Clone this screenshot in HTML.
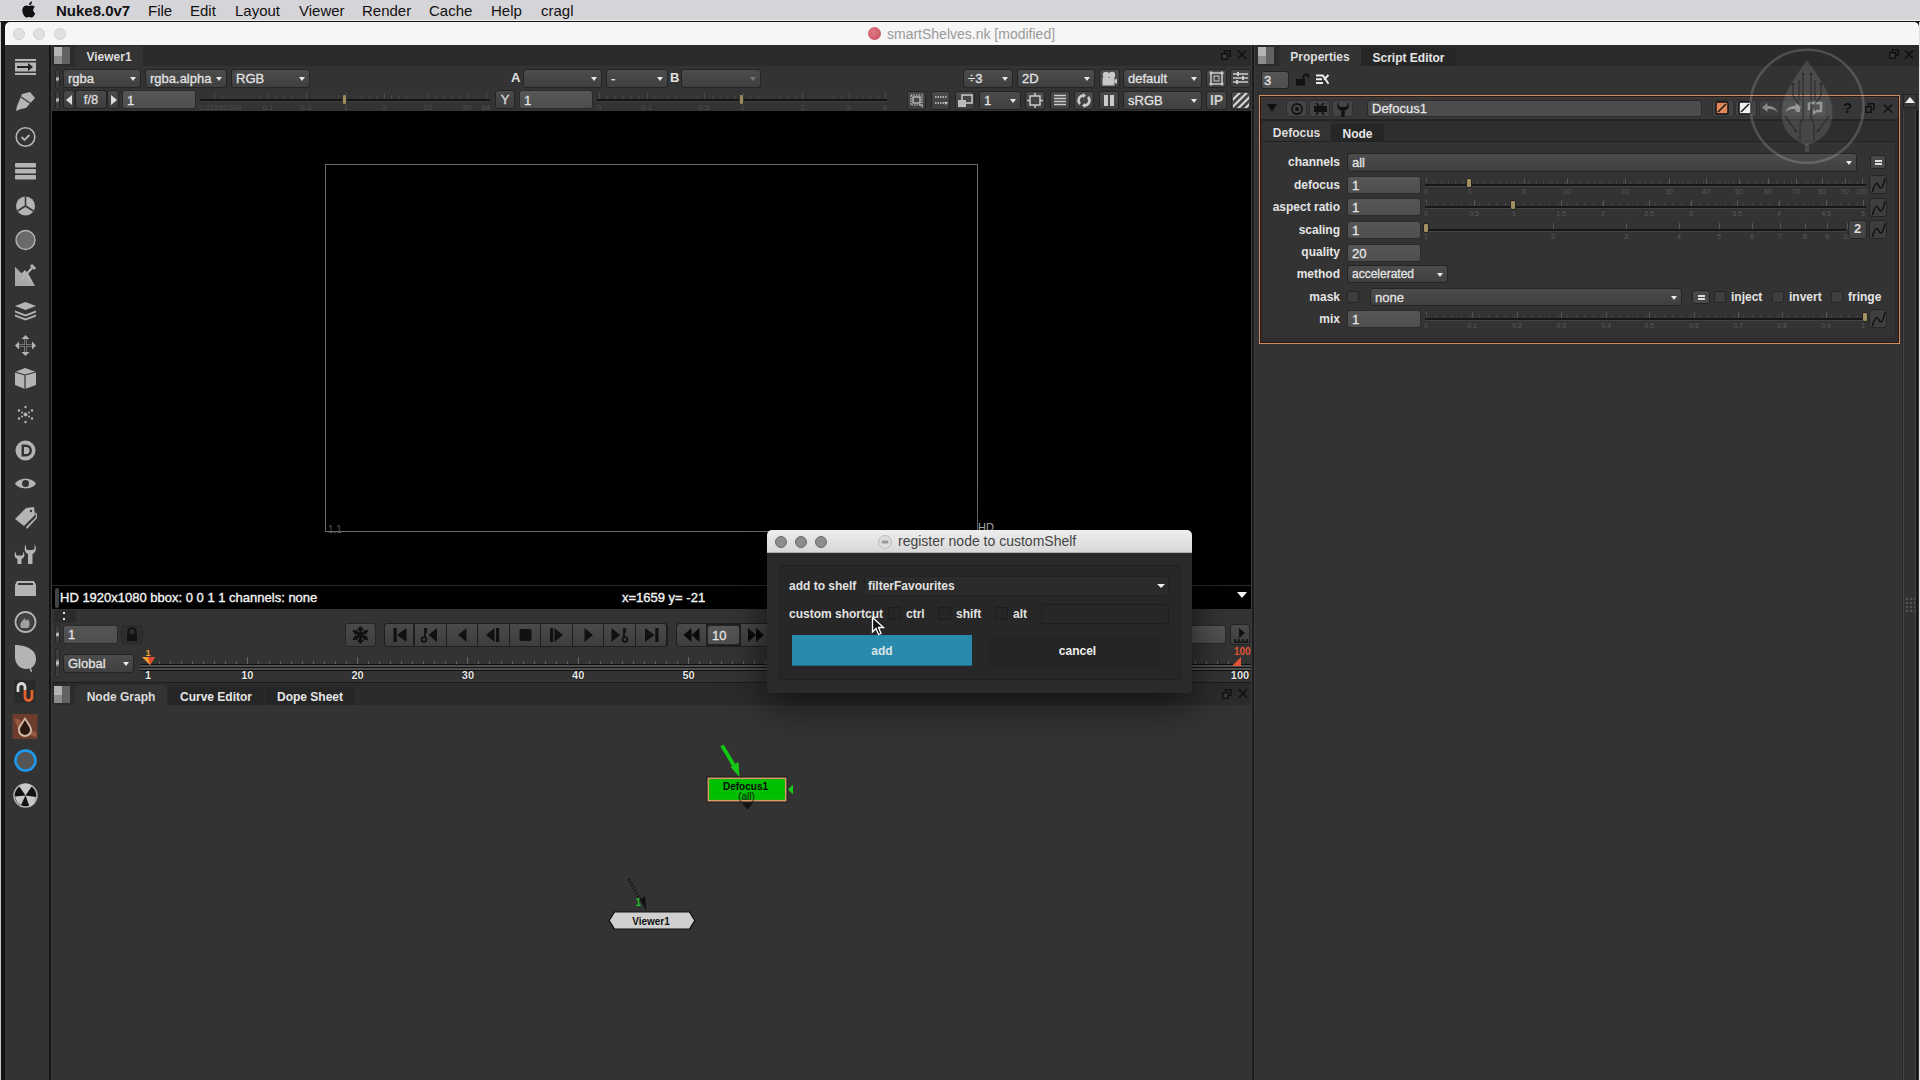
<!DOCTYPE html>
<html><head><meta charset="utf-8">
<style>
*{box-sizing:border-box;margin:0;padding:0}
html,body{width:1920px;height:1080px;overflow:hidden;background:#141414;font-family:"Liberation Sans",sans-serif}
.a{position:absolute}
.mi{position:absolute;top:2px;font-size:15px;color:#111;line-height:18px}
.tl{position:absolute;top:6px;width:12px;height:12px;border-radius:50%;background:#e0e0e0;border:1px solid #d2d2d2}
.tab{position:absolute;height:21px;background:#333;color:#ddd;font-size:13px;line-height:21px;text-align:center;border-radius:3px 3px 0 0}
.tab2{background:#262626;color:#e6e6e6}
.dd{position:absolute;height:19px;background:linear-gradient(#4c4c4c,#3f3f3f);border-radius:3px;border:1px solid #242424;color:#e2e2e2;font-size:13px;line-height:18px;padding-left:4px;white-space:nowrap;-webkit-text-stroke:0.3px #e2e2e2}
.dd:after{content:"";position:absolute;right:4px;top:7px;border-left:3.5px solid transparent;border-right:3.5px solid transparent;border-top:4px solid #e8e8e8}
.dis:after{border-top-color:#777}
.pdd{font-size:13px;line-height:17px}
.btn{position:absolute;height:19px;background:linear-gradient(#4a4a4a,#3e3e3e);border-radius:3px;border:1px solid #242424}
.inp{position:absolute;background:linear-gradient(#565656,#4e4e4e);border-radius:3px;border:1px solid #2a2a2a;color:#e4e4e4;font-size:13px;padding-left:4px;-webkit-text-stroke:0.3px #e4e4e4}
.pinp{font-size:13px;line-height:17px}
.lbl{font-size:13px;font-weight:bold;color:#e0e0e0}
.grip{position:absolute;width:5px;height:20px;border-radius:3px;background:linear-gradient(170deg,#3c3c3c 35%,#cfcfcf 50%,#3c3c3c 65%);border:1px solid #262626}
.slider{position:absolute;height:19px}
.slider:before{content:"";position:absolute;left:0;right:0;top:9px;height:2px;background:#141414}
.hdl{position:absolute;top:3px;width:5px;height:11px;border-radius:2px;background:#9c8c5c;border:1px solid #333}
.hdl2{position:absolute;width:6px;height:10px;border-radius:2px;background:#a39060;border:1px solid #222}
.tri-l{position:absolute;left:2px;top:4px;border-top:5px solid transparent;border-bottom:5px solid transparent;border-right:6px solid #ddd}
.tri-r{position:absolute;left:3px;top:4px;border-top:5px solid transparent;border-bottom:5px solid transparent;border-left:6px solid #ddd}
.info{font-size:13px;color:#f4f4f4;-webkit-text-stroke:0.35px #f4f4f4}
.rl{width:24px;text-align:center;font-size:11px;font-weight:bold;color:#e8e8e8;text-shadow:0 0 1px #000,0 0 1px #000}
.plbl{text-align:right;font-size:12px;font-weight:bold;color:#e4e4e4;line-height:16px}
.plbl2{font-size:12px;font-weight:bold;color:#e4e4e4;line-height:16px}
.tlb{width:20px;text-align:center;font-size:7px;color:#5a5a5a}
.cb{width:12px;height:12px;background:#3e3e3e;border:1px solid #262626;border-radius:2px}
.dlbl{font-size:12px;font-weight:bold;color:#e2e2e2;line-height:16px}
.dcb{width:13px;height:13px;background:#262626;border:1px solid #1c1c1c;border-radius:2px}
</style></head><body>
<div class="a" style="left:0;top:0;width:1920px;height:21px;background:#d5d4d8"></div>
<div class="a" style="left:0;top:20px;width:1920px;height:1px;background:#f0f0f0"></div><div class="a" style="left:0;top:21px;width:1920px;height:1px;background:#111"></div>
<svg class="a" style="left:21px;top:1px" width="15" height="17" viewBox="0 0 15 17"><path d="M12.2 9c0-2 1.6-3 1.7-3-1-1.4-2.4-1.6-2.9-1.6-1.2-.1-2.4.7-3 .7-.6 0-1.6-.7-2.6-.7C4 4.4 2.7 5.2 2 6.4.6 8.9 1.7 12.500 3 14.5c.7 1 1.5 2 2.500 2 1 0 1.400-.6 2.600-.6 1.200 0 1.500.6 2.600.6s1.800-1 2.400-2c.8-1.100 1.100-2.200 1.100-2.200s-2-.8-2-3.300zM10.300 3c.5-.7.900-1.600.8-2.500-.8 0-1.700.5-2.300 1.200-.5.600-.9 1.500-.8 2.400.9.1 1.800-.4 2.300-1.100z" fill="#111"/></svg>
<div class="mi" style="left:56px;font-weight:bold">Nuke8.0v7</div>
<div class="mi" style="left:148px">File</div>
<div class="mi" style="left:190px">Edit</div>
<div class="mi" style="left:235px">Layout</div>
<div class="mi" style="left:299px">Viewer</div>
<div class="mi" style="left:362px">Render</div>
<div class="mi" style="left:429px">Cache</div>
<div class="mi" style="left:491px">Help</div>
<div class="mi" style="left:541px">cragl</div>
<div class="a" style="left:5px;top:22px;width:1914px;height:23px;background:#f6f6f6;border-radius:5px 5px 0 0"></div>
<div class="tl" style="left:13px;top:28px"></div>
<div class="tl" style="left:33px;top:28px"></div>
<div class="tl" style="left:54px;top:28px"></div>
<div class="a" style="left:868px;top:27px;width:13px;height:13px;border-radius:50%;background:radial-gradient(circle at 40% 40%,#e07a86,#c84a5a)"></div>
<div class="a" style="left:887px;top:26px;font-size:14px;color:#9a9a9a">smartShelves.nk [modified]</div>
<div class="a" style="left:5px;top:45px;width:44px;height:1035px;background:#333"></div>
<div class="a" style="left:49px;top:45px;width:3px;height:1035px;background:#141414;border-right:1px solid #3c3c3c"></div>
<div class="a" style="left:52px;top:45px;width:1200px;height:640px;background:#333"></div>
<div class="a" style="left:1251px;top:45px;width:4px;height:1035px;background:#1c1c1c;border-left:1px solid #3a3a3a;border-right:1px solid #3a3a3a"></div>
<div class="a" style="left:1255px;top:45px;width:665px;height:1035px;background:#333"></div>
<svg class="a" style="left:5px;top:45px" width="45" height="1035" viewBox="5 45 45 1035">
<g fill="#b4b4b4" stroke="none">
 <!-- 1 stripes arrow -->
 <rect x="15" y="59" width="21" height="2"/><rect x="15" y="62.5" width="21" height="9"/><rect x="15" y="73" width="21" height="2"/>
 <path d="M17 66h11v-3l5 4-5 4v-3H17z" fill="#222"/>
 <!-- 2 pencil -->
 <path d="M22 94l8-2 5 6-9 10-5 1-5 2 1-5z"/>
 <path d="M21 97l12 8" stroke="#333" stroke-width="1.2"/>
 <!-- 3 clock -->
 <circle cx="25.5" cy="137" r="9.3" fill="none" stroke="#b4b4b4" stroke-width="1.6"/>
 <path d="M21.5 137l3 3 5-5" fill="none" stroke="#b4b4b4" stroke-width="1.8"/>
 <!-- 4 bars -->
 <rect x="15" y="163" width="21" height="4.5" rx="1"/><rect x="15" y="169" width="21" height="4.5" rx="1"/><rect x="15" y="175" width="21" height="4.5" rx="1"/>
 <!-- 5 pie -->
 <circle cx="25.5" cy="206" r="9.5"/>
 <path d="M25.5 196.5V206L17.5 211M25.5 206L33.5 211" stroke="#333" stroke-width="1.5" fill="none"/>
 <!-- 6 circle -->
 <circle cx="25.5" cy="240" r="9.5" fill="#6a6a6a" stroke="#b4b4b4" stroke-width="1.4"/>
 <!-- 7 dropper -->
 <path d="M15 267l6 7 4-4 4 5 6 11H15z" fill="#b4b4b4"/>
 <path d="M15 267v19h20z" fill="#a8a8a8"/>
 <path d="M21 280L32 268" stroke="#b4b4b4" stroke-width="2.2"/><path d="M31 265l4 4" stroke="#b4b4b4" stroke-width="3"/>
 <!-- 8 layers -->
 <path d="M15 306l10.5-4 10.5 4-10.5 4z"/>
 <path d="M15 310.5l10.5 4 10.5-4v2l-10.5 4-10.5-4z"/>
 <path d="M15 314.5l10.5 4 10.5-4v2l-10.5 4-10.5-4z"/>
 <!-- 9 move -->
 <path d="M25.5 335l4 4h-3v5.5h5.5v-3l4 4-4 4v-3h-5.5v5.5h3l-4 4-4-4h3v-5.5h-5.5v3l-4-4 4-4v3h5.5v-5.5h-3z" fill="#b4b4b4"/>
 <path d="M25.5 339v13M19 345.5h13" stroke="#333" stroke-width="1"/>
 <!-- 10 cube -->
 <path d="M15 372l10-4 11 4v13l-11 4-10-4z"/>
 <path d="M15 372l10 3 11-3M25 375v14" stroke="#333" stroke-width="1.2" fill="none"/>
 <!-- 11 sparkle -->
 <g fill="#b4b4b4"><circle cx="25.5" cy="414.5" r="2"/><circle cx="25.5" cy="407" r="1.2"/><circle cx="25.5" cy="422" r="1.2"/><circle cx="19" cy="410.5" r="1.2"/><circle cx="32" cy="410.5" r="1.2"/><circle cx="19" cy="418.5" r="1.2"/><circle cx="32" cy="418.5" r="1.2"/><circle cx="22" cy="412.5" r="1"/><circle cx="29" cy="412.5" r="1"/><circle cx="22" cy="416.5" r="1"/><circle cx="29" cy="416.5" r="1"/></g>
 <!-- 12 D -->
 <circle cx="25.5" cy="450.5" r="10"/>
 <path d="M21.5 444.5h4.5a6 6 0 0 1 0 12h-4.5z" fill="#333"/>
 <path d="M24 447h2a3.5 3.5 0 0 1 0 7h-2z" fill="#b4b4b4"/>
 <!-- 13 eye -->
 <path d="M15 483.5C19 477 32 477 36 483.5C32 490 19 490 15 483.5z"/>
 <circle cx="25.5" cy="483.5" r="3.5" fill="#333"/>
 <!-- 14 tag -->
 <path d="M15 519l11-11 8-1 1 8-11 11z"/>
 <path d="M26 527l10-10 -1-5 2 2 0 4-10 11z"/>
 <circle cx="31" cy="511" r="1.2" fill="#333"/>
 <!-- 15 wrenches -->
 <path d="M26 544.5C23.5 548 24.5 552.5 28 554V564H32.5V554C36 552.5 37 548 34.5 544.5V548.5L33 550H27.5L26 548.5Z"/>
 <path d="M16 551.5C13.5 554.5 14.5 558 17.5 559V564H21.5V559C24.5 558 25.5 554.5 23 551.5V554.5L22 555.5H17L16 554.5Z"/>
<!-- 16 box -->
 <path d="M17 581h17l2 4v11H15v-11z"/>
 <path d="M18 583h15v2H18z" fill="#333"/>
 <!-- 17 flame circle -->
 <circle cx="25.5" cy="622" r="10" fill="none" stroke="#b4b4b4" stroke-width="1.8"/>
 <circle cx="25.5" cy="622" r="8" fill="#444"/>
 <path d="M21 628c-2-4 1-7 4-10 0 3 2 3 3 1 2 3 2 7 0 9z" fill="#a0a0a0"/>
 <!-- 18 leaf -->
 <path d="M15 645c10 0 21 4 21 14 0 7-5 10-10 10-6 0-11-5-11-12z"/>
 <path d="M30 668c1 2 2 3 1 4" stroke="#b4b4b4" stroke-width="1.5" fill="none"/>
</g>
 <!-- 19 magnet -->
 <rect x="14" y="680" width="21.5" height="23" fill="#2a2a2a"/>
 <path d="M18 692v-5a3.5 3.5 0 0 1 7 0v3" fill="none" stroke="#d8d8d8" stroke-width="2.8"/>
 <path d="M25 690v7a3.5 3.5 0 0 0 7 0v-7" fill="none" stroke="#e0622a" stroke-width="2.8"/>
 <!-- 20 drop on brown -->
 <rect x="12.5" y="714" width="25" height="25" fill="#6e3c2c"/>
 <path d="M14 718l6 2 3 6-5 3z" fill="#94583e"/><path d="M30 730l6 2 1 5-6-1z" fill="#94583e"/>
 <path d="M25 717c-3 5-7 9-7 13a7 7 0 0 0 14 0c0-4-4-8-7-13z" fill="#d0b8a8"/>
 <path d="M25 720c-2 4-5 7-5 10a5 5 0 0 0 10 0c0-3-3-6-5-10z" fill="#2a1810"/>
 <!-- 21 blue ring -->
 <circle cx="25.5" cy="760.5" r="10" fill="#555" stroke="#1e9af0" stroke-width="2.6"/>
 <!-- 22 radiation -->
 <circle cx="25.5" cy="795.5" r="11.5" fill="#111" stroke="#b0b0b0" stroke-width="1.5"/>
 <path d="M25.5 795.5L19 786a11 11 0 0 1 13 0zM25.5 795.5L36 797a11 11 0 0 1-6.5 9.5zM25.5 795.5L21 805a11 11 0 0 1-6-8.5z" fill="#c8c8c8"/>
</svg>
<!-- VIEWER PANEL -->
<div class="a" style="left:52px;top:45px;width:1200px;height:21px;background:#2b2b2b"></div>
<div class="a" style="left:54px;top:47px;width:16px;height:17px;background:linear-gradient(90deg,transparent 50%,#626262 50%),linear-gradient(#b4b4b4 55%,#8c8c8c 55%)"></div>
<div class="tab" style="left:75px;top:46px;width:68px;height:20px;line-height:22px;font-weight:bold;font-size:12px;color:#ddd">Viewer1</div>
<!-- float/close icons -->
<svg class="a" style="left:1221px;top:50px" width="10" height="10" viewBox="0 0 10 10"><rect x="3.5" y="0.75" width="5.5" height="5.5" fill="none" stroke="#111" stroke-width="1.5"/><rect x="0.75" y="3.75" width="5.5" height="5.5" fill="#3a3a3a" stroke="#111" stroke-width="1.5"/></svg>
<svg class="a" style="left:1237px;top:50px" width="10" height="9" viewBox="0 0 10 9"><path d="M1 0.5L9 8.5M9 0.5L1 8.5" stroke="#111" stroke-width="1.7"/></svg>
<!-- toolbar row 1 -->
<div class="grip" style="left:55px;top:69px"></div>
<div class="dd" style="left:63px;top:69px;width:78px">rgba</div>
<div class="dd" style="left:145px;top:69px;width:82px">rgba.alpha</div>
<div class="dd" style="left:231px;top:69px;width:79px">RGB</div>
<div class="a lbl" style="left:511px;top:70px">A</div>
<div class="dd" style="left:523px;top:69px;width:79px"></div>
<div class="dd" style="left:606px;top:69px;width:62px">-</div>
<div class="a lbl" style="left:670px;top:70px">B</div>
<div class="dd dis" style="left:681px;top:69px;width:80px"></div>
<div class="dd" style="left:963px;top:69px;width:50px">÷3</div>
<div class="dd" style="left:1017px;top:69px;width:78px">2D</div>
<div class="btn" style="left:1099px;top:69px;width:21px"><svg class="a" style="left:0;top:0" width="19" height="17" viewBox="0 0 19 17"><circle cx="6" cy="5" r="3.2" fill="#c8c8c8"/><circle cx="12" cy="5" r="3.2" fill="#c8c8c8"/><rect x="2.5" y="7.5" width="12" height="8" fill="#c8c8c8"/><path d="M14.5 10L17 8.5V14L14.5 12.5z" fill="#c8c8c8"/></svg></div>
<div class="dd" style="left:1123px;top:69px;width:79px">default</div>
<div class="btn" style="left:1206px;top:69px;width:21px"><svg width="19" height="17" viewBox="0 0 19 17"><rect x="4" y="3" width="11" height="11" fill="none" stroke="#ccc" stroke-width="1.5"/><rect x="7" y="6" width="5" height="5" fill="none" stroke="#ccc" stroke-width="1"/><path d="M2 3h4M13 3h4M2 14h4M13 14h4M4 1v4M15 1v4M4 12v4M15 12v4" stroke="#ccc" stroke-width="1"/></svg></div>
<div class="btn" style="left:1230px;top:69px;width:21px"><svg width="19" height="17" viewBox="0 0 19 17"><path d="M2 4h15M2 8h15M2 12h15" stroke="#ccc" stroke-width="1.5"/><path d="M7 2v4M12 6v4M6 10v4" stroke="#ccc" stroke-width="2"/></svg></div>
<!-- toolbar row 2 -->
<div class="grip" style="left:55px;top:90px"></div>
<div class="btn" style="left:63px;top:90px;width:12px"><div class="tri-l"></div></div>
<div class="btn" style="left:75px;top:90px;width:32px;color:#ddd;font-size:13px;text-align:center;line-height:17px;-webkit-text-stroke:0.3px #ddd">f/8</div>
<div class="btn" style="left:107px;top:90px;width:12px"><div class="tri-r"></div></div>
<div class="inp" style="left:122px;top:90px;width:74px;height:19px;line-height:19px">1</div>
<div class="a" style="left:214.0px;top:93px;width:1px;height:6px;background:#4c4c4c"></div>
<div class="a" style="left:199.0px;top:103px;width:30px;text-align:center;font-size:8px;color:#4e4e4e">0.0156250̶3</div>
<div class="a" style="left:268.0px;top:93px;width:1px;height:6px;background:#4c4c4c"></div>
<div class="a" style="left:253.0px;top:103px;width:30px;text-align:center;font-size:8px;color:#4e4e4e">0.1</div>
<div class="a" style="left:306.0px;top:93px;width:1px;height:6px;background:#4c4c4c"></div>
<div class="a" style="left:291.0px;top:103px;width:30px;text-align:center;font-size:8px;color:#4e4e4e">0.3</div>
<div class="a" style="left:346.0px;top:93px;width:1px;height:6px;background:#4c4c4c"></div>
<div class="a" style="left:331.0px;top:103px;width:30px;text-align:center;font-size:8px;color:#4e4e4e">1</div>
<div class="a" style="left:384.0px;top:93px;width:1px;height:6px;background:#4c4c4c"></div>
<div class="a" style="left:369.0px;top:103px;width:30px;text-align:center;font-size:8px;color:#4e4e4e">3</div>
<div class="a" style="left:428.0px;top:93px;width:1px;height:6px;background:#4c4c4c"></div>
<div class="a" style="left:413.0px;top:103px;width:30px;text-align:center;font-size:8px;color:#4e4e4e">10</div>
<div class="a" style="left:467.0px;top:93px;width:1px;height:6px;background:#4c4c4c"></div>
<div class="a" style="left:452.0px;top:103px;width:30px;text-align:center;font-size:8px;color:#4e4e4e">30</div>
<div class="a" style="left:486.0px;top:93px;width:1px;height:6px;background:#4c4c4c"></div>
<div class="a" style="left:471.0px;top:103px;width:30px;text-align:center;font-size:8px;color:#4e4e4e">64</div>
<div class="a" style="left:221.7px;top:95px;width:1px;height:4px;background:#424242"></div>
<div class="a" style="left:229.4px;top:95px;width:1px;height:4px;background:#424242"></div>
<div class="a" style="left:237.1px;top:95px;width:1px;height:4px;background:#424242"></div>
<div class="a" style="left:244.9px;top:95px;width:1px;height:4px;background:#424242"></div>
<div class="a" style="left:252.6px;top:95px;width:1px;height:4px;background:#424242"></div>
<div class="a" style="left:260.3px;top:95px;width:1px;height:4px;background:#424242"></div>
<div class="a" style="left:275.6px;top:95px;width:1px;height:4px;background:#424242"></div>
<div class="a" style="left:283.2px;top:95px;width:1px;height:4px;background:#424242"></div>
<div class="a" style="left:290.8px;top:95px;width:1px;height:4px;background:#424242"></div>
<div class="a" style="left:298.4px;top:95px;width:1px;height:4px;background:#424242"></div>
<div class="a" style="left:314.0px;top:95px;width:1px;height:4px;background:#424242"></div>
<div class="a" style="left:322.0px;top:95px;width:1px;height:4px;background:#424242"></div>
<div class="a" style="left:330.0px;top:95px;width:1px;height:4px;background:#424242"></div>
<div class="a" style="left:338.0px;top:95px;width:1px;height:4px;background:#424242"></div>
<div class="a" style="left:353.6px;top:95px;width:1px;height:4px;background:#424242"></div>
<div class="a" style="left:361.2px;top:95px;width:1px;height:4px;background:#424242"></div>
<div class="a" style="left:368.8px;top:95px;width:1px;height:4px;background:#424242"></div>
<div class="a" style="left:376.4px;top:95px;width:1px;height:4px;background:#424242"></div>
<div class="a" style="left:391.3px;top:95px;width:1px;height:4px;background:#424242"></div>
<div class="a" style="left:398.7px;top:95px;width:1px;height:4px;background:#424242"></div>
<div class="a" style="left:406.0px;top:95px;width:1px;height:4px;background:#424242"></div>
<div class="a" style="left:413.3px;top:95px;width:1px;height:4px;background:#424242"></div>
<div class="a" style="left:420.7px;top:95px;width:1px;height:4px;background:#424242"></div>
<div class="a" style="left:435.8px;top:95px;width:1px;height:4px;background:#424242"></div>
<div class="a" style="left:443.6px;top:95px;width:1px;height:4px;background:#424242"></div>
<div class="a" style="left:451.4px;top:95px;width:1px;height:4px;background:#424242"></div>
<div class="a" style="left:459.2px;top:95px;width:1px;height:4px;background:#424242"></div>
<div class="a" style="left:476.5px;top:95px;width:1px;height:4px;background:#424242"></div>
<div class="a" style="left:200px;top:99px;width:290px;height:2px;background:#141414"></div>
<div class="a" style="left:200px;top:101px;width:290px;height:1px;background:#3d3d3d"></div>
<div class="a hdl" style="left:342px;top:94px"></div>
<div class="btn" style="left:495px;top:90px;width:20px;color:#ddd;font-size:13px;text-align:center;line-height:18px;-webkit-text-stroke:0.3px #ddd">Y</div>
<div class="inp" style="left:519px;top:90px;width:74px;height:19px;line-height:19px">1</div>
<div class="a" style="left:599.0px;top:93px;width:1px;height:6px;background:#4c4c4c"></div>
<div class="a" style="left:584.0px;top:103px;width:30px;text-align:center;font-size:8px;color:#4e4e4e">0</div>
<div class="a" style="left:646.5px;top:93px;width:1px;height:6px;background:#4c4c4c"></div>
<div class="a" style="left:631.5px;top:103px;width:30px;text-align:center;font-size:8px;color:#4e4e4e">0.1</div>
<div class="a" style="left:704.0px;top:93px;width:1px;height:6px;background:#4c4c4c"></div>
<div class="a" style="left:689.0px;top:103px;width:30px;text-align:center;font-size:8px;color:#4e4e4e">0.5</div>
<div class="a" style="left:742.7px;top:93px;width:1px;height:6px;background:#4c4c4c"></div>
<div class="a" style="left:727.7px;top:103px;width:30px;text-align:center;font-size:8px;color:#4e4e4e">1</div>
<div class="a" style="left:802.4px;top:93px;width:1px;height:6px;background:#4c4c4c"></div>
<div class="a" style="left:787.4px;top:103px;width:30px;text-align:center;font-size:8px;color:#4e4e4e">2</div>
<div class="a" style="left:848.5px;top:93px;width:1px;height:6px;background:#4c4c4c"></div>
<div class="a" style="left:833.5px;top:103px;width:30px;text-align:center;font-size:8px;color:#4e4e4e">3</div>
<div class="a" style="left:884.8px;top:93px;width:1px;height:6px;background:#4c4c4c"></div>
<div class="a" style="left:869.8px;top:103px;width:30px;text-align:center;font-size:8px;color:#4e4e4e">4</div>
<div class="a" style="left:606.9px;top:95px;width:1px;height:4px;background:#424242"></div>
<div class="a" style="left:614.8px;top:95px;width:1px;height:4px;background:#424242"></div>
<div class="a" style="left:622.8px;top:95px;width:1px;height:4px;background:#424242"></div>
<div class="a" style="left:630.7px;top:95px;width:1px;height:4px;background:#424242"></div>
<div class="a" style="left:638.6px;top:95px;width:1px;height:4px;background:#424242"></div>
<div class="a" style="left:653.7px;top:95px;width:1px;height:4px;background:#424242"></div>
<div class="a" style="left:660.9px;top:95px;width:1px;height:4px;background:#424242"></div>
<div class="a" style="left:668.1px;top:95px;width:1px;height:4px;background:#424242"></div>
<div class="a" style="left:675.2px;top:95px;width:1px;height:4px;background:#424242"></div>
<div class="a" style="left:682.4px;top:95px;width:1px;height:4px;background:#424242"></div>
<div class="a" style="left:689.6px;top:95px;width:1px;height:4px;background:#424242"></div>
<div class="a" style="left:696.8px;top:95px;width:1px;height:4px;background:#424242"></div>
<div class="a" style="left:711.7px;top:95px;width:1px;height:4px;background:#424242"></div>
<div class="a" style="left:719.5px;top:95px;width:1px;height:4px;background:#424242"></div>
<div class="a" style="left:727.2px;top:95px;width:1px;height:4px;background:#424242"></div>
<div class="a" style="left:735.0px;top:95px;width:1px;height:4px;background:#424242"></div>
<div class="a" style="left:750.2px;top:95px;width:1px;height:4px;background:#424242"></div>
<div class="a" style="left:757.6px;top:95px;width:1px;height:4px;background:#424242"></div>
<div class="a" style="left:765.1px;top:95px;width:1px;height:4px;background:#424242"></div>
<div class="a" style="left:772.5px;top:95px;width:1px;height:4px;background:#424242"></div>
<div class="a" style="left:780.0px;top:95px;width:1px;height:4px;background:#424242"></div>
<div class="a" style="left:787.5px;top:95px;width:1px;height:4px;background:#424242"></div>
<div class="a" style="left:794.9px;top:95px;width:1px;height:4px;background:#424242"></div>
<div class="a" style="left:810.1px;top:95px;width:1px;height:4px;background:#424242"></div>
<div class="a" style="left:817.8px;top:95px;width:1px;height:4px;background:#424242"></div>
<div class="a" style="left:825.5px;top:95px;width:1px;height:4px;background:#424242"></div>
<div class="a" style="left:833.1px;top:95px;width:1px;height:4px;background:#424242"></div>
<div class="a" style="left:840.8px;top:95px;width:1px;height:4px;background:#424242"></div>
<div class="a" style="left:855.8px;top:95px;width:1px;height:4px;background:#424242"></div>
<div class="a" style="left:863.0px;top:95px;width:1px;height:4px;background:#424242"></div>
<div class="a" style="left:870.3px;top:95px;width:1px;height:4px;background:#424242"></div>
<div class="a" style="left:877.5px;top:95px;width:1px;height:4px;background:#424242"></div>
<div class="a" style="left:597px;top:99px;width:290px;height:2px;background:#141414"></div>
<div class="a" style="left:597px;top:101px;width:290px;height:1px;background:#3d3d3d"></div>
<div class="a hdl" style="left:739px;top:94px"></div>
<div class="btn" style="left:907px;top:91px;width:19px"><svg width="17" height="17" viewBox="0 0 17 17"><rect x="3" y="3" width="11" height="10" fill="none" stroke="#ccc" stroke-width="1.2" stroke-dasharray="1.5 1"/><rect x="5" y="5" width="7" height="6" fill="none" stroke="#ccc" stroke-width="1.2"/><path d="M11 12l4 3" stroke="#ccc" stroke-width="1"/></svg></div>
<div class="btn" style="left:931px;top:91px;width:19px"><svg width="17" height="17" viewBox="0 0 17 17"><path d="M3 5h12M3 11h9" stroke="#ccc" stroke-width="1.5" stroke-dasharray="1.5 1"/><path d="M12 10l4 0-2 3z" fill="#ccc"/></svg></div>
<div class="btn" style="left:955px;top:91px;width:20px"><svg width="18" height="17" viewBox="0 0 18 17"><rect x="6" y="3" width="10" height="8" fill="none" stroke="#ccc" stroke-width="1.5"/><rect x="2" y="8" width="8" height="7" fill="#bbb"/></svg></div>
<div class="dd" style="left:979px;top:91px;width:42px">1</div>
<div class="btn" style="left:1025px;top:91px;width:20px"><svg width="18" height="17" viewBox="0 0 18 17"><rect x="4" y="4" width="10" height="9" fill="none" stroke="#ccc" stroke-width="1.5"/><path d="M9 1v3M9 13v3M1 8.5h3M14 8.5h3" stroke="#ccc" stroke-width="1.5"/></svg></div>
<div class="btn" style="left:1050px;top:91px;width:20px"><svg width="18" height="17" viewBox="0 0 18 17"><path d="M3 3.5h12M3 6.5h12M3 9.5h12M3 12.5h12" stroke="#ccc" stroke-width="1.5"/></svg></div>
<div class="btn" style="left:1074px;top:91px;width:20px"><svg width="18" height="17" viewBox="0 0 18 17"><path d="M5 12A5 5 0 0 1 9 3.5" fill="none" stroke="#ccc" stroke-width="2.5"/><path d="M13 5A5 5 0 0 1 9 13.5" fill="none" stroke="#ccc" stroke-width="2.5"/><path d="M8 1l3 2.5-3 2.5z M10 16l-3-2.5 3-2.5z" fill="#ccc"/></svg></div>
<div class="btn" style="left:1099px;top:91px;width:20px"><svg width="18" height="17" viewBox="0 0 18 17"><rect x="4" y="3" width="4" height="11" fill="#ccc"/><rect x="10" y="3" width="4" height="11" fill="#ccc"/></svg></div>
<div class="dd" style="left:1123px;top:91px;width:79px">sRGB</div>
<div class="btn" style="left:1206px;top:91px;width:21px;color:#ccc;font-size:14px;font-weight:bold;line-height:17px;text-align:center">IP</div>
<div class="btn" style="left:1231px;top:91px;width:20px;overflow:hidden"><svg class="a" style="left:0;top:0" width="18" height="17" viewBox="0 0 18 17"><path d="M1 6L6 1H9L1 9zM1 13L13 1H16L1 16zM5 16L17 4V7L8 16zM12 16L17 11V14L15 16z" fill="#d8d8d8"/></svg></div>
<!-- black viewer -->
<div class="a" style="left:52px;top:111px;width:1200px;height:474px;background:#000"></div>
<div class="a" style="left:325px;top:164px;width:653px;height:368px;border:1px solid #6c6c6c"></div>
<div class="a" style="left:328px;top:524px;font-size:10px;color:#555">1,1</div>
<div class="a" style="left:978px;top:521px;font-size:11px;color:#c4c4c4">HD</div>
<!-- info bar -->
<div class="a" style="left:52px;top:585px;width:1200px;height:24px;background:#000;border-top:1px solid #2a2a2a"></div>
<div class="a" style="left:55px;top:588px;width:4px;height:20px;border-radius:2px;background:#444"></div>
<div class="a info" style="left:60px;top:590px">HD 1920x1080 bbox: 0 0 1 1 channels: none</div>
<div class="a info" style="left:622px;top:590px">x=1659 y= -21</div>
<div class="a" style="left:1237px;top:592px;border-left:5px solid transparent;border-right:5px solid transparent;border-top:6px solid #f4f4f4"></div>
<!-- TIMELINE -->
<div class="a" style="left:52px;top:609px;width:1200px;height:74px;background:#333"></div>
<div class="a" style="left:54px;top:610px;width:22px;height:7px;border-radius:4px;background:#2a2a2a"></div>
<div class="a" style="left:54px;top:616px;width:22px;height:7px;border-radius:4px;background:#2a2a2a"></div>
<div class="a" style="left:63px;top:612px;width:2px;height:2px;background:#e8e8e8"></div>
<div class="a" style="left:63px;top:618px;width:2px;height:2px;background:#e8e8e8"></div>
<div class="grip" style="left:55px;top:624px;height:21px"></div>
<div class="inp" style="left:63px;top:625px;width:55px;height:19px;line-height:17px">1</div>
<div class="btn" style="left:121px;top:625px;width:22px;background:#2e2e2e;border-color:#282828"><svg width="20" height="17" viewBox="0 0 20 17"><path d="M6.5 8V5.5a3.5 3.5 0 0 1 7 0V8" fill="none" stroke="#111" stroke-width="2"/><rect x="5" y="8" width="10" height="7" fill="#111"/></svg></div>
<div class="grip" style="left:55px;top:648px;height:30px"></div>
<div class="dd" style="left:63px;top:654px;width:71px;height:19px">Global</div>
<div class="btn" style="left:345px;top:623px;width:31px;height:24px"><svg class="a" style="left:0;top:0" width="29" height="22" viewBox="0 0 29 22"><g stroke="#111" stroke-width="2.6" fill="none" stroke-linecap="round"><path d="M14.5 3.5v15M8 7.2l13 7.6M8 14.8l13-7.6"/></g><g stroke="#111" stroke-width="1.8" fill="none"><path d="M12 4.5l2.5 2 2.5-2M12 17.5l2.5-2 2.5 2M8.5 10l2.5-1-0.5-3M20.5 12l-2.5 1 0.5 3M8.5 12l2.5 1-0.5 3M20.5 10l-2.5-1 0.5-3"/></g><circle cx="14.5" cy="11" r="3" fill="#111"/></svg></div>

<div class="a" style="left:384px;top:623px;width:284px;height:24px;border-radius:4px;background:#1e1e1e"></div>
<div class="btn" style="left:384.7px;top:624px;width:29.8px;height:22px;border-radius:3px 0 0 3px;border-color:#1e1e1e;border-width:0 1px 0 0"><svg class="a" style="left:0;top:0" width="31" height="22" viewBox="0 0 31 22"><path d="M8.5 4h3.2v14H8.5zM21.5 4v14l-9.5-7z" fill="#111"/></svg></div>
<div class="btn" style="left:414.5px;top:624px;width:32.1px;height:22px;border-radius:0;border-color:#1e1e1e;border-width:0 1px 0 0"><svg class="a" style="left:0;top:0" width="31" height="22" viewBox="0 0 31 22"><path d="M22 4v14l-8.5-7z" fill="#111"/><circle cx="9" cy="15.5" r="2.3" fill="none" stroke="#111" stroke-width="1.8"/><path d="M10 13.2V4M10 5.5h2.5M10 8h2" stroke="#111" stroke-width="1.8"/></svg></div>
<div class="btn" style="left:446.6px;top:624px;width:31.0px;height:22px;border-radius:0;border-color:#1e1e1e;border-width:0 1px 0 0"><svg class="a" style="left:0;top:0" width="31" height="22" viewBox="0 0 31 22"><path d="M19.5 4v14l-8.5-7z" fill="#111"/></svg></div>
<div class="btn" style="left:477.6px;top:624px;width:32.1px;height:22px;border-radius:0;border-color:#1e1e1e;border-width:0 1px 0 0"><svg class="a" style="left:0;top:0" width="31" height="22" viewBox="0 0 31 22"><path d="M16.5 4v14l-8.5-7zM18 4h3.2v14H18z" fill="#111"/></svg></div>
<div class="btn" style="left:509.7px;top:624px;width:31.0px;height:22px;border-radius:0;border-color:#1e1e1e;border-width:0 1px 0 0"><svg class="a" style="left:0;top:0" width="31" height="22" viewBox="0 0 31 22"><rect x="9.5" y="5" width="12" height="12" rx="2" fill="#111"/></svg></div>
<div class="btn" style="left:540.7px;top:624px;width:32.1px;height:22px;border-radius:0;border-color:#1e1e1e;border-width:0 1px 0 0"><svg class="a" style="left:0;top:0" width="31" height="22" viewBox="0 0 31 22"><path d="M9 4h3.2v14H9zM13.5 4v14l8.5-7z" fill="#111"/></svg></div>
<div class="btn" style="left:572.8px;top:624px;width:31.0px;height:22px;border-radius:0;border-color:#1e1e1e;border-width:0 1px 0 0"><svg class="a" style="left:0;top:0" width="31" height="22" viewBox="0 0 31 22"><path d="M11.5 4v14l8.5-7z" fill="#111"/></svg></div>
<div class="btn" style="left:603.8px;top:624px;width:32.1px;height:22px;border-radius:0;border-color:#1e1e1e;border-width:0 1px 0 0"><svg class="a" style="left:0;top:0" width="31" height="22" viewBox="0 0 31 22"><path d="M7.5 4v14l8.5-7z" fill="#111"/><circle cx="21" cy="15.5" r="2.3" fill="none" stroke="#111" stroke-width="1.8"/><path d="M20 13.2V4M20 5.5h2.5M20 8h2" stroke="#111" stroke-width="1.8"/></svg></div>
<div class="btn" style="left:635.9px;top:624px;width:30.9px;height:22px;border-radius:0 3px 3px 0;border-color:#1e1e1e;border-width:0 1px 0 0"><svg class="a" style="left:0;top:0" width="31" height="22" viewBox="0 0 31 22"><path d="M9 4v14l9.5-7zM19.3 4h3.2v14h-3.2z" fill="#111"/></svg></div>
<div class="a" style="left:676px;top:623px;width:100px;height:24px;border-radius:4px;background:#1e1e1e"></div>
<div class="btn" style="left:677px;top:624px;width:29px;height:22px;border-radius:3px 0 0 3px;border-width:0"><svg class="a" style="left:0;top:0" width="29" height="22" viewBox="0 0 29 22"><path d="M14.5 4v14l-8-7zM22.5 4v14l-8-7z" fill="#0a0a0a"/></svg></div>
<div class="inp" style="left:707px;top:625px;width:33px;height:20px;line-height:19px;font-size:13px;padding-left:4px;border-color:#262626">10</div>
<div class="btn" style="left:741px;top:624px;width:35px;height:22px;border-radius:0;border-width:0"><svg class="a" style="left:0;top:0" width="29" height="22" viewBox="0 0 29 22"><path d="M7 4v14l8-7zM15 4v14l8-7z" fill="#0a0a0a"/></svg></div>
<div class="inp" style="left:1170px;top:625px;width:56px;height:19px"></div>
<div class="btn" style="left:1230px;top:624px;width:20px;height:21px"><svg class="a" style="left:0;top:0" width="20" height="21" viewBox="0 0 20 21"><path d="M8 3v10l6-5z" fill="#111"/><path d="M3 17h14M4 14v3M8 14v3M12 14v3M16 14v3" stroke="#111" stroke-width="1.5"/></svg></div>
<div class="a" style="left:140px;top:664px;width:1112px;height:7px;background:#111"></div>
<div class="a" style="left:140px;top:665px;width:1112px;height:2px;background:#4e4e4e"></div>
<div class="a" style="left:140px;top:668px;width:1112px;height:2px;background:#4e4e4e"></div>
<div class="a" style="left:147.5px;top:661px;width:1px;height:3px;background:#5e5e5e"></div>
<div class="a" style="left:158.5px;top:661px;width:1px;height:3px;background:#5e5e5e"></div>
<div class="a" style="left:169.6px;top:661px;width:1px;height:3px;background:#5e5e5e"></div>
<div class="a" style="left:180.6px;top:661px;width:1px;height:3px;background:#5e5e5e"></div>
<div class="a" style="left:191.6px;top:661px;width:1px;height:3px;background:#5e5e5e"></div>
<div class="a" style="left:202.7px;top:661px;width:1px;height:3px;background:#5e5e5e"></div>
<div class="a" style="left:213.7px;top:661px;width:1px;height:3px;background:#5e5e5e"></div>
<div class="a" style="left:224.7px;top:661px;width:1px;height:3px;background:#5e5e5e"></div>
<div class="a" style="left:235.7px;top:661px;width:1px;height:3px;background:#5e5e5e"></div>
<div class="a" style="left:246.8px;top:657px;width:1px;height:7px;background:#666"></div>
<div class="a" style="left:257.8px;top:661px;width:1px;height:3px;background:#5e5e5e"></div>
<div class="a" style="left:268.8px;top:661px;width:1px;height:3px;background:#5e5e5e"></div>
<div class="a" style="left:279.9px;top:661px;width:1px;height:3px;background:#5e5e5e"></div>
<div class="a" style="left:290.9px;top:661px;width:1px;height:3px;background:#5e5e5e"></div>
<div class="a" style="left:301.9px;top:661px;width:1px;height:3px;background:#5e5e5e"></div>
<div class="a" style="left:312.9px;top:661px;width:1px;height:3px;background:#5e5e5e"></div>
<div class="a" style="left:324.0px;top:661px;width:1px;height:3px;background:#5e5e5e"></div>
<div class="a" style="left:335.0px;top:661px;width:1px;height:3px;background:#5e5e5e"></div>
<div class="a" style="left:346.0px;top:661px;width:1px;height:3px;background:#5e5e5e"></div>
<div class="a" style="left:357.1px;top:657px;width:1px;height:7px;background:#666"></div>
<div class="a" style="left:368.1px;top:661px;width:1px;height:3px;background:#5e5e5e"></div>
<div class="a" style="left:379.1px;top:661px;width:1px;height:3px;background:#5e5e5e"></div>
<div class="a" style="left:390.2px;top:661px;width:1px;height:3px;background:#5e5e5e"></div>
<div class="a" style="left:401.2px;top:661px;width:1px;height:3px;background:#5e5e5e"></div>
<div class="a" style="left:412.2px;top:661px;width:1px;height:3px;background:#5e5e5e"></div>
<div class="a" style="left:423.2px;top:661px;width:1px;height:3px;background:#5e5e5e"></div>
<div class="a" style="left:434.3px;top:661px;width:1px;height:3px;background:#5e5e5e"></div>
<div class="a" style="left:445.3px;top:661px;width:1px;height:3px;background:#5e5e5e"></div>
<div class="a" style="left:456.3px;top:661px;width:1px;height:3px;background:#5e5e5e"></div>
<div class="a" style="left:467.4px;top:657px;width:1px;height:7px;background:#666"></div>
<div class="a" style="left:478.4px;top:661px;width:1px;height:3px;background:#5e5e5e"></div>
<div class="a" style="left:489.4px;top:661px;width:1px;height:3px;background:#5e5e5e"></div>
<div class="a" style="left:500.5px;top:661px;width:1px;height:3px;background:#5e5e5e"></div>
<div class="a" style="left:511.5px;top:661px;width:1px;height:3px;background:#5e5e5e"></div>
<div class="a" style="left:522.5px;top:661px;width:1px;height:3px;background:#5e5e5e"></div>
<div class="a" style="left:533.5px;top:661px;width:1px;height:3px;background:#5e5e5e"></div>
<div class="a" style="left:544.6px;top:661px;width:1px;height:3px;background:#5e5e5e"></div>
<div class="a" style="left:555.6px;top:661px;width:1px;height:3px;background:#5e5e5e"></div>
<div class="a" style="left:566.6px;top:661px;width:1px;height:3px;background:#5e5e5e"></div>
<div class="a" style="left:577.7px;top:657px;width:1px;height:7px;background:#666"></div>
<div class="a" style="left:588.7px;top:661px;width:1px;height:3px;background:#5e5e5e"></div>
<div class="a" style="left:599.7px;top:661px;width:1px;height:3px;background:#5e5e5e"></div>
<div class="a" style="left:610.8px;top:661px;width:1px;height:3px;background:#5e5e5e"></div>
<div class="a" style="left:621.8px;top:661px;width:1px;height:3px;background:#5e5e5e"></div>
<div class="a" style="left:632.8px;top:661px;width:1px;height:3px;background:#5e5e5e"></div>
<div class="a" style="left:643.8px;top:661px;width:1px;height:3px;background:#5e5e5e"></div>
<div class="a" style="left:654.9px;top:661px;width:1px;height:3px;background:#5e5e5e"></div>
<div class="a" style="left:665.9px;top:661px;width:1px;height:3px;background:#5e5e5e"></div>
<div class="a" style="left:676.9px;top:661px;width:1px;height:3px;background:#5e5e5e"></div>
<div class="a" style="left:688.0px;top:657px;width:1px;height:7px;background:#666"></div>
<div class="a" style="left:699.0px;top:661px;width:1px;height:3px;background:#5e5e5e"></div>
<div class="a" style="left:710.0px;top:661px;width:1px;height:3px;background:#5e5e5e"></div>
<div class="a" style="left:721.1px;top:661px;width:1px;height:3px;background:#5e5e5e"></div>
<div class="a" style="left:732.1px;top:661px;width:1px;height:3px;background:#5e5e5e"></div>
<div class="a" style="left:743.1px;top:661px;width:1px;height:3px;background:#5e5e5e"></div>
<div class="a" style="left:754.1px;top:661px;width:1px;height:3px;background:#5e5e5e"></div>
<div class="a" style="left:765.2px;top:661px;width:1px;height:3px;background:#5e5e5e"></div>
<div class="a" style="left:776.2px;top:661px;width:1px;height:3px;background:#5e5e5e"></div>
<div class="a" style="left:787.2px;top:661px;width:1px;height:3px;background:#5e5e5e"></div>
<div class="a" style="left:798.3px;top:657px;width:1px;height:7px;background:#666"></div>
<div class="a" style="left:809.3px;top:661px;width:1px;height:3px;background:#5e5e5e"></div>
<div class="a" style="left:820.3px;top:661px;width:1px;height:3px;background:#5e5e5e"></div>
<div class="a" style="left:831.4px;top:661px;width:1px;height:3px;background:#5e5e5e"></div>
<div class="a" style="left:842.4px;top:661px;width:1px;height:3px;background:#5e5e5e"></div>
<div class="a" style="left:853.4px;top:661px;width:1px;height:3px;background:#5e5e5e"></div>
<div class="a" style="left:864.4px;top:661px;width:1px;height:3px;background:#5e5e5e"></div>
<div class="a" style="left:875.5px;top:661px;width:1px;height:3px;background:#5e5e5e"></div>
<div class="a" style="left:886.5px;top:661px;width:1px;height:3px;background:#5e5e5e"></div>
<div class="a" style="left:897.5px;top:661px;width:1px;height:3px;background:#5e5e5e"></div>
<div class="a" style="left:908.6px;top:657px;width:1px;height:7px;background:#666"></div>
<div class="a" style="left:919.6px;top:661px;width:1px;height:3px;background:#5e5e5e"></div>
<div class="a" style="left:930.6px;top:661px;width:1px;height:3px;background:#5e5e5e"></div>
<div class="a" style="left:941.7px;top:661px;width:1px;height:3px;background:#5e5e5e"></div>
<div class="a" style="left:952.7px;top:661px;width:1px;height:3px;background:#5e5e5e"></div>
<div class="a" style="left:963.7px;top:661px;width:1px;height:3px;background:#5e5e5e"></div>
<div class="a" style="left:974.8px;top:661px;width:1px;height:3px;background:#5e5e5e"></div>
<div class="a" style="left:985.8px;top:661px;width:1px;height:3px;background:#5e5e5e"></div>
<div class="a" style="left:996.8px;top:661px;width:1px;height:3px;background:#5e5e5e"></div>
<div class="a" style="left:1007.8px;top:661px;width:1px;height:3px;background:#5e5e5e"></div>
<div class="a" style="left:1018.9px;top:657px;width:1px;height:7px;background:#666"></div>
<div class="a" style="left:1029.9px;top:661px;width:1px;height:3px;background:#5e5e5e"></div>
<div class="a" style="left:1040.9px;top:661px;width:1px;height:3px;background:#5e5e5e"></div>
<div class="a" style="left:1052.0px;top:661px;width:1px;height:3px;background:#5e5e5e"></div>
<div class="a" style="left:1063.0px;top:661px;width:1px;height:3px;background:#5e5e5e"></div>
<div class="a" style="left:1074.0px;top:661px;width:1px;height:3px;background:#5e5e5e"></div>
<div class="a" style="left:1085.0px;top:661px;width:1px;height:3px;background:#5e5e5e"></div>
<div class="a" style="left:1096.1px;top:661px;width:1px;height:3px;background:#5e5e5e"></div>
<div class="a" style="left:1107.1px;top:661px;width:1px;height:3px;background:#5e5e5e"></div>
<div class="a" style="left:1118.1px;top:661px;width:1px;height:3px;background:#5e5e5e"></div>
<div class="a" style="left:1129.2px;top:657px;width:1px;height:7px;background:#666"></div>
<div class="a" style="left:1140.2px;top:661px;width:1px;height:3px;background:#5e5e5e"></div>
<div class="a" style="left:1151.2px;top:661px;width:1px;height:3px;background:#5e5e5e"></div>
<div class="a" style="left:1162.3px;top:661px;width:1px;height:3px;background:#5e5e5e"></div>
<div class="a" style="left:1173.3px;top:661px;width:1px;height:3px;background:#5e5e5e"></div>
<div class="a" style="left:1184.3px;top:661px;width:1px;height:3px;background:#5e5e5e"></div>
<div class="a" style="left:1195.3px;top:661px;width:1px;height:3px;background:#5e5e5e"></div>
<div class="a" style="left:1206.4px;top:661px;width:1px;height:3px;background:#5e5e5e"></div>
<div class="a" style="left:1217.4px;top:661px;width:1px;height:3px;background:#5e5e5e"></div>
<div class="a" style="left:1228.4px;top:661px;width:1px;height:3px;background:#5e5e5e"></div>
<div class="a" style="left:1239.5px;top:657px;width:1px;height:7px;background:#666"></div>
<div class="a rl" style="left:136.0px;top:669px">1</div>
<div class="a rl" style="left:235.3px;top:669px">10</div>
<div class="a rl" style="left:345.6px;top:669px">20</div>
<div class="a rl" style="left:455.9px;top:669px">30</div>
<div class="a rl" style="left:566.2px;top:669px">40</div>
<div class="a rl" style="left:676.5px;top:669px">50</div>
<div class="a rl" style="left:786.8px;top:669px">60</div>
<div class="a rl" style="left:897.1px;top:669px">70</div>
<div class="a rl" style="left:1007.4px;top:669px">80</div>
<div class="a rl" style="left:1117.7px;top:669px">90</div>
<div class="a rl" style="left:1228.0px;top:669px">100</div>
<svg class="a" style="left:141px;top:648px" width="16" height="18" viewBox="0 0 16 18"><path d="M1 9h13l-5 8z" fill="#f0a030"/><path d="M7 9h7l-5 8z" fill="#e04a2a"/><text x="7" y="8" font-size="9" font-weight="bold" fill="#f0a030" font-family="Liberation Sans" text-anchor="middle">1</text></svg>
<div class="a" style="left:1234px;top:646px;font-size:10px;font-weight:bold;color:#e05535">100</div>
<svg class="a" style="left:1232px;top:656px" width="10" height="10" viewBox="0 0 10 10"><path d="M0 10L9 1V10z" fill="#e05535"/></svg>
<div class="a" style="left:52px;top:682px;width:1200px;height:1px;background:#1c1c1c"></div><!-- NODE GRAPH -->
<div class="a" style="left:52px;top:683px;width:1200px;height:22px;background:#2b2b2b"></div>
<div class="a" style="left:54px;top:686px;width:16px;height:17px;background:linear-gradient(90deg,transparent 50%,#626262 50%),linear-gradient(#b4b4b4 55%,#8c8c8c 55%)"></div>
<div class="tab" style="left:75px;top:685px;width:92px;height:20px;line-height:24px;font-weight:bold;font-size:12px">Node Graph</div>
<div class="tab tab2" style="left:168px;top:687px;width:96px;height:18px;line-height:21px;font-weight:bold;font-size:12px">Curve Editor</div>
<div class="tab tab2" style="left:265px;top:687px;width:90px;height:18px;line-height:21px;font-weight:bold;font-size:12px">Dope Sheet</div>
<svg class="a" style="left:1222px;top:689px" width="10" height="10" viewBox="0 0 10 10"><rect x="3.5" y="0.75" width="5.5" height="5.5" fill="none" stroke="#111" stroke-width="1.5"/><rect x="0.75" y="3.75" width="5.5" height="5.5" fill="#3a3a3a" stroke="#111" stroke-width="1.5"/></svg>
<svg class="a" style="left:1238px;top:689px" width="10" height="9" viewBox="0 0 10 9"><path d="M1 0.5L9 8.5M9 0.5L1 8.5" stroke="#111" stroke-width="1.7"/></svg>
<div class="a" style="left:52px;top:705px;width:1200px;height:375px;background:#333"></div>
<!-- nodes -->
<svg class="a" style="left:600px;top:735px" width="210" height="200" viewBox="600 735 210 200">
  <path d="M722 745.5L735.5 768" stroke="#12c812" stroke-width="3.8"/>
  <path d="M730.5 767L739.5 777L738.5 762z" fill="#18c818"/>
  <rect x="706.5" y="776.5" width="81" height="26" fill="#1a1a1a"/><rect x="708.3" y="778.3" width="77.4" height="22.4" fill="#00be00" stroke="#d29a68" stroke-width="1.6"/>
  <path d="M793 784.5V794.5L788 789.5z" fill="#18c818"/>
  <path d="M742 802.5H753L747.5 810z" fill="#111"/>
  <text x="745.5" y="790" font-family="Liberation Sans" font-size="10" font-weight="bold" text-anchor="middle" fill="#0a0a0a">Defocus1</text>
  <text x="746.5" y="799.5" font-family="Liberation Sans" font-size="10" text-anchor="middle" fill="#111">(all)</text>
  <path d="M628.5 879L641 901" stroke="#1a1a1a" stroke-width="3" stroke-dasharray="1.6 1.6"/>
  <path d="M640 900L646.5 911L645 896z" fill="#111"/>
  <text x="635.5" y="905.5" font-family="Liberation Sans" font-size="10" font-weight="bold" fill="#20c020">1</text>
  <path d="M614.5 911.8H689.5L694.8 920.5L689.5 929.2H614.5L609.2 920.5z" fill="#d0d0d0" stroke="#111" stroke-width="1.3"/>
  <text x="651" y="924.5" font-family="Liberation Sans" font-size="10" font-weight="bold" text-anchor="middle" fill="#111">Viewer1</text>
</svg>
<div class="a" style="left:1251px;top:45px;width:1px;height:1035px;background:#3a3a3a"></div>
<div class="a" style="left:1255px;top:45px;width:664px;height:21px;background:#2b2b2b"></div>
<div class="a" style="left:1258px;top:47px;width:16px;height:17px;background:linear-gradient(90deg,transparent 50%,#626262 50%),linear-gradient(#b4b4b4 55%,#8c8c8c 55%)"></div>
<div class="tab" style="left:1279px;top:46px;width:82px;height:20px;line-height:23px;font-weight:bold;font-size:12px">Properties</div>
<div class="tab tab2" style="left:1361px;top:48px;width:95px;height:18px;line-height:21px;font-weight:bold;font-size:12px">Script Editor</div>
<svg class="a" style="left:1889px;top:49px" width="10" height="10" viewBox="0 0 10 10"><rect x="3.5" y="0.75" width="5.5" height="5.5" fill="none" stroke="#111" stroke-width="1.5"/><rect x="0.75" y="3.75" width="5.5" height="5.5" fill="#3a3a3a" stroke="#111" stroke-width="1.5"/></svg>
<svg class="a" style="left:1904px;top:50px" width="10" height="9" viewBox="0 0 10 9"><path d="M1 0.5L9 8.5M9 0.5L1 8.5" stroke="#111" stroke-width="1.7"/></svg>
<div class="inp" style="left:1261px;top:71px;width:28px;height:18px;line-height:18px;font-size:13px;padding-left:2px;border-color:#222">3</div>
<svg class="a" style="left:1295px;top:73px" width="15" height="13" viewBox="0 0 15 13"><path d="M8.5 6V4a2.5 2.5 0 0 1 5 0v1" fill="none" stroke="#111" stroke-width="1.8"/><rect x="1" y="6" width="9" height="6.5" fill="#111"/></svg>
<svg class="a" style="left:1315px;top:74px" width="15" height="11" viewBox="0 0 15 11"><path d="M1 1.5H8M1 5.2H7M1 9H8" stroke="#ececec" stroke-width="1.9"/><path d="M7.5 1L13.5 9.8M13.5 1L9 5.5" stroke="#ececec" stroke-width="2"/></svg>
<div class="a" style="left:1259px;top:95px;width:641px;height:249px;border:1px solid #d08c62;background:#2e2e2e"></div><div class="a" style="left:1260px;top:96px;width:639px;height:247px;border:1px solid #2a1a10"></div>
<div class="a" style="left:1261px;top:97px;width:637px;height:24px;background:#373737;border-bottom:2px solid #242424;border-top:1px solid #3e3e3e"></div>
<div class="a" style="left:1267px;top:104px;border-left:5px solid transparent;border-right:5px solid transparent;border-top:8px solid #111"></div>
<div class="btn" style="left:1286px;top:100px;width:21px;height:17px;background:#444;border-color:#2e2e2e"><svg class="a" style="left:0;top:-1px" width="20" height="18" viewBox="0 0 20 18"><circle cx="10" cy="9" r="5" fill="none" stroke="#111" stroke-width="1.8"/><circle cx="10" cy="9" r="2" fill="#111"/></svg></div>
<div class="btn" style="left:1309px;top:100px;width:21px;height:17px;background:#444;border-color:#2e2e2e"><svg class="a" style="left:0;top:-1px" width="20" height="18" viewBox="0 0 20 18"><rect x="4" y="6" width="13" height="6" fill="#111"/><path d="M6 3l3 3M14 3l-3 3M8 12l-2 3M12 12l2 3" stroke="#111" stroke-width="1.5"/></svg></div>
<div class="btn" style="left:1332px;top:100px;width:21px;height:17px;background:#444;border-color:#2e2e2e"><svg class="a" style="left:0;top:-1px" width="20" height="18" viewBox="0 0 20 18"><path d="M5.5 2C3 5 4 9.5 8.3 10.5V17H11.7V10.5C16 9.5 17 5 14.5 2V5.5L12.5 7H7.5L5.5 5.5Z" fill="#111"/></svg></div>
<div class="inp" style="left:1367px;top:100px;width:335px;height:17px;line-height:16px;font-size:13px;background:#4c4c4c">Defocus1</div>
<div class="btn" style="left:1712px;top:100px;width:22px;height:17px;background:#444;border-color:#2e2e2e"></div>
<svg class="a" style="left:1715px;top:101px" width="14" height="14" viewBox="0 0 14 14"><rect x="1" y="1" width="12" height="12" rx="1.5" fill="#e0875a" stroke="#111" stroke-width="1.5"/><path d="M3 11L11 3" stroke="#111" stroke-width="1.5"/></svg>
<div class="btn" style="left:1735px;top:100px;width:22px;height:17px;background:#444;border-color:#2e2e2e"></div>
<svg class="a" style="left:1738px;top:101px" width="14" height="14" viewBox="0 0 14 14"><rect x="1" y="1" width="12" height="12" rx="1.5" fill="#eee" stroke="#111" stroke-width="1.5"/><path d="M3 11L11 3" stroke="#111" stroke-width="1.5"/></svg>
<div class="btn" style="left:1759px;top:100px;width:22px;height:17px;background:#3e3e3e;border-color:#333"></div>
<div class="btn" style="left:1782px;top:100px;width:22px;height:17px;background:#3e3e3e;border-color:#333"></div>
<div class="btn" style="left:1805px;top:100px;width:22px;height:17px;background:#3e3e3e;border-color:#333"></div>
<svg class="a" style="left:1761px;top:101px" width="18" height="14" viewBox="0 0 18 14"><path d="M1 6.5L6.5 2V5C11 5 15 6.5 16.5 11C14 8.5 11 8 6.5 8V11z" fill="#8a8a8a"/></svg>
<svg class="a" style="left:1784px;top:101px" width="18" height="14" viewBox="0 0 18 14"><path d="M17 6.5L11.5 2V5C7 5 3 6.5 1.5 11C4 8.5 7 8 11.5 8V11z" fill="#8a8a8a"/><rect x="13" y="6" width="3" height="5" fill="#8a8a8a"/></svg>
<svg class="a" style="left:1807px;top:101px" width="17" height="15" viewBox="0 0 17 15"><path d="M2 2h12v8H9" fill="none" stroke="#8a8a8a" stroke-width="2.5"/><path d="M2 2v7" stroke="#8a8a8a" stroke-width="2.5"/><path d="M6 8l4 3-4 3z" fill="#8a8a8a"/></svg>
<div class="a" style="left:1843px;top:99px;font-size:15px;font-weight:bold;color:#111">?</div>
<svg class="a" style="left:1865px;top:103px" width="10" height="10" viewBox="0 0 10 10"><rect x="3.5" y="0.75" width="5.5" height="5.5" fill="none" stroke="#111" stroke-width="1.5"/><rect x="0.75" y="3.75" width="5.5" height="5.5" fill="#3a3a3a" stroke="#111" stroke-width="1.5"/></svg>
<svg class="a" style="left:1883px;top:104px" width="10" height="9" viewBox="0 0 10 9"><path d="M1 0.5L9 8.5M9 0.5L1 8.5" stroke="#111" stroke-width="1.7"/></svg>
<div class="a" style="left:1261px;top:121px;width:637px;height:20px;background:#2e2e2e"></div>
<div class="tab" style="left:1263px;top:122px;width:67px;height:19px;line-height:22px;font-weight:bold;font-size:12px;background:#333">Defocus</div>
<div class="tab tab2" style="left:1331px;top:124px;width:53px;height:17px;line-height:20px;font-weight:bold;font-size:12px">Node</div>
<div class="a" style="left:1262px;top:141px;width:634px;height:198px;background:#333;border:1px solid #2a2a2a;border-top:1px solid #222"></div>
<div class="a plbl" style="left:1240px;top:154px;width:100px">channels</div>
<div class="a plbl" style="left:1240px;top:177px;width:100px">defocus</div>
<div class="a plbl" style="left:1240px;top:199px;width:100px">aspect ratio</div>
<div class="a plbl" style="left:1240px;top:222px;width:100px">scaling</div>
<div class="a plbl" style="left:1240px;top:244px;width:100px">quality</div>
<div class="a plbl" style="left:1240px;top:266px;width:100px">method</div>
<div class="a plbl" style="left:1240px;top:289px;width:100px">mask</div>
<div class="a plbl" style="left:1240px;top:311px;width:100px">mix</div>
<div class="dd pdd" style="left:1347px;top:153px;width:510px;height:19px">all</div>
<div class="btn" style="left:1870px;top:155px;width:16px;height:14px;background:#484848"><div class="a" style="left:4px;top:4px;width:7px;height:1.5px;background:#ddd"></div><div class="a" style="left:4px;top:7px;width:7px;height:1.5px;background:#ddd"></div></div>
<div class="inp pinp" style="left:1347px;top:176px;width:74px;height:18px">1</div>
<div class="btn" style="left:1869px;top:175px;width:18px;height:19px;background:#3e3e3e"><svg class="a" style="left:0;top:0" width="17" height="18" viewBox="0 0 17 18"><path d="M2.5 15.5C3.5 12 5 7 7 7.5C9 8 9 12.5 11 12C13 11.5 14 6 15 3" fill="none" stroke="#111" stroke-width="1.5" stroke-linecap="round"/></svg></div>
<div class="a" style="left:1426.0px;top:178px;width:1px;height:6px;background:#555"></div>
<div class="a" style="left:1470.0px;top:178px;width:1px;height:6px;background:#555"></div>
<div class="a" style="left:1524.0px;top:178px;width:1px;height:6px;background:#555"></div>
<div class="a" style="left:1567.0px;top:178px;width:1px;height:6px;background:#555"></div>
<div class="a" style="left:1625.0px;top:178px;width:1px;height:6px;background:#555"></div>
<div class="a" style="left:1669.0px;top:178px;width:1px;height:6px;background:#555"></div>
<div class="a" style="left:1706.0px;top:178px;width:1px;height:6px;background:#555"></div>
<div class="a" style="left:1739.0px;top:178px;width:1px;height:6px;background:#555"></div>
<div class="a" style="left:1768.0px;top:178px;width:1px;height:6px;background:#555"></div>
<div class="a" style="left:1796.0px;top:178px;width:1px;height:6px;background:#555"></div>
<div class="a" style="left:1822.0px;top:178px;width:1px;height:6px;background:#555"></div>
<div class="a" style="left:1845.0px;top:178px;width:1px;height:6px;background:#555"></div>
<div class="a" style="left:1862.0px;top:178px;width:1px;height:6px;background:#555"></div>
<div class="a" style="left:1426.0px;top:181px;width:1px;height:3px;background:#444"></div>
<div class="a" style="left:1433.3px;top:181px;width:1px;height:3px;background:#444"></div>
<div class="a" style="left:1440.6px;top:181px;width:1px;height:3px;background:#444"></div>
<div class="a" style="left:1447.9px;top:181px;width:1px;height:3px;background:#444"></div>
<div class="a" style="left:1455.2px;top:181px;width:1px;height:3px;background:#444"></div>
<div class="a" style="left:1462.5px;top:181px;width:1px;height:3px;background:#444"></div>
<div class="a" style="left:1469.8px;top:181px;width:1px;height:3px;background:#444"></div>
<div class="a" style="left:1477.1px;top:181px;width:1px;height:3px;background:#444"></div>
<div class="a" style="left:1484.4px;top:181px;width:1px;height:3px;background:#444"></div>
<div class="a" style="left:1491.7px;top:181px;width:1px;height:3px;background:#444"></div>
<div class="a" style="left:1499.0px;top:181px;width:1px;height:3px;background:#444"></div>
<div class="a" style="left:1506.3px;top:181px;width:1px;height:3px;background:#444"></div>
<div class="a" style="left:1513.6px;top:181px;width:1px;height:3px;background:#444"></div>
<div class="a" style="left:1520.9px;top:181px;width:1px;height:3px;background:#444"></div>
<div class="a" style="left:1528.2px;top:181px;width:1px;height:3px;background:#444"></div>
<div class="a" style="left:1535.5px;top:181px;width:1px;height:3px;background:#444"></div>
<div class="a" style="left:1542.8px;top:181px;width:1px;height:3px;background:#444"></div>
<div class="a" style="left:1550.1px;top:181px;width:1px;height:3px;background:#444"></div>
<div class="a" style="left:1557.4px;top:181px;width:1px;height:3px;background:#444"></div>
<div class="a" style="left:1564.7px;top:181px;width:1px;height:3px;background:#444"></div>
<div class="a" style="left:1572.0px;top:181px;width:1px;height:3px;background:#444"></div>
<div class="a" style="left:1579.3px;top:181px;width:1px;height:3px;background:#444"></div>
<div class="a" style="left:1586.6px;top:181px;width:1px;height:3px;background:#444"></div>
<div class="a" style="left:1593.9px;top:181px;width:1px;height:3px;background:#444"></div>
<div class="a" style="left:1601.2px;top:181px;width:1px;height:3px;background:#444"></div>
<div class="a" style="left:1608.5px;top:181px;width:1px;height:3px;background:#444"></div>
<div class="a" style="left:1615.8px;top:181px;width:1px;height:3px;background:#444"></div>
<div class="a" style="left:1623.1px;top:181px;width:1px;height:3px;background:#444"></div>
<div class="a" style="left:1630.4px;top:181px;width:1px;height:3px;background:#444"></div>
<div class="a" style="left:1637.7px;top:181px;width:1px;height:3px;background:#444"></div>
<div class="a" style="left:1645.0px;top:181px;width:1px;height:3px;background:#444"></div>
<div class="a" style="left:1652.3px;top:181px;width:1px;height:3px;background:#444"></div>
<div class="a" style="left:1659.6px;top:181px;width:1px;height:3px;background:#444"></div>
<div class="a" style="left:1666.9px;top:181px;width:1px;height:3px;background:#444"></div>
<div class="a" style="left:1674.2px;top:181px;width:1px;height:3px;background:#444"></div>
<div class="a" style="left:1681.5px;top:181px;width:1px;height:3px;background:#444"></div>
<div class="a" style="left:1688.8px;top:181px;width:1px;height:3px;background:#444"></div>
<div class="a" style="left:1696.1px;top:181px;width:1px;height:3px;background:#444"></div>
<div class="a" style="left:1703.4px;top:181px;width:1px;height:3px;background:#444"></div>
<div class="a" style="left:1710.7px;top:181px;width:1px;height:3px;background:#444"></div>
<div class="a" style="left:1718.0px;top:181px;width:1px;height:3px;background:#444"></div>
<div class="a" style="left:1725.3px;top:181px;width:1px;height:3px;background:#444"></div>
<div class="a" style="left:1732.6px;top:181px;width:1px;height:3px;background:#444"></div>
<div class="a" style="left:1739.9px;top:181px;width:1px;height:3px;background:#444"></div>
<div class="a" style="left:1747.2px;top:181px;width:1px;height:3px;background:#444"></div>
<div class="a" style="left:1754.5px;top:181px;width:1px;height:3px;background:#444"></div>
<div class="a" style="left:1761.8px;top:181px;width:1px;height:3px;background:#444"></div>
<div class="a" style="left:1769.1px;top:181px;width:1px;height:3px;background:#444"></div>
<div class="a" style="left:1776.4px;top:181px;width:1px;height:3px;background:#444"></div>
<div class="a" style="left:1783.7px;top:181px;width:1px;height:3px;background:#444"></div>
<div class="a" style="left:1791.0px;top:181px;width:1px;height:3px;background:#444"></div>
<div class="a" style="left:1798.3px;top:181px;width:1px;height:3px;background:#444"></div>
<div class="a" style="left:1805.6px;top:181px;width:1px;height:3px;background:#444"></div>
<div class="a" style="left:1812.9px;top:181px;width:1px;height:3px;background:#444"></div>
<div class="a" style="left:1820.2px;top:181px;width:1px;height:3px;background:#444"></div>
<div class="a" style="left:1827.5px;top:181px;width:1px;height:3px;background:#444"></div>
<div class="a" style="left:1834.8px;top:181px;width:1px;height:3px;background:#444"></div>
<div class="a" style="left:1842.1px;top:181px;width:1px;height:3px;background:#444"></div>
<div class="a" style="left:1849.4px;top:181px;width:1px;height:3px;background:#444"></div>
<div class="a" style="left:1856.7px;top:181px;width:1px;height:3px;background:#444"></div>
<div class="a" style="left:1425px;top:184px;width:441px;height:2px;background:#161616"></div>
<div class="a" style="left:1425px;top:186px;width:441px;height:1px;background:#444"></div>
<div class="a tlb" style="left:1416.0px;top:188px">0</div>
<div class="a tlb" style="left:1460.0px;top:188px">1</div>
<div class="a tlb" style="left:1514.0px;top:188px">5</div>
<div class="a tlb" style="left:1557.0px;top:188px">10</div>
<div class="a tlb" style="left:1615.0px;top:188px">20</div>
<div class="a tlb" style="left:1659.0px;top:188px">30</div>
<div class="a tlb" style="left:1696.0px;top:188px">40</div>
<div class="a tlb" style="left:1729.0px;top:188px">50</div>
<div class="a tlb" style="left:1758.0px;top:188px">60</div>
<div class="a tlb" style="left:1786.0px;top:188px">70</div>
<div class="a tlb" style="left:1812.0px;top:188px">80</div>
<div class="a tlb" style="left:1835.0px;top:188px">90</div>
<div class="a tlb" style="left:1852.0px;top:188px">100</div>
<div class="a hdl2" style="left:1466px;top:178px"></div>
<div class="inp pinp" style="left:1347px;top:198px;width:74px;height:18px">1</div>
<div class="btn" style="left:1869px;top:198px;width:18px;height:19px;background:#3e3e3e"><svg class="a" style="left:0;top:0" width="17" height="18" viewBox="0 0 17 18"><path d="M2.5 15.5C3.5 12 5 7 7 7.5C9 8 9 12.5 11 12C13 11.5 14 6 15 3" fill="none" stroke="#111" stroke-width="1.5" stroke-linecap="round"/></svg></div>
<div class="a" style="left:1426.0px;top:200px;width:1px;height:6px;background:#555"></div>
<div class="a" style="left:1474.0px;top:200px;width:1px;height:6px;background:#555"></div>
<div class="a" style="left:1514.0px;top:200px;width:1px;height:6px;background:#555"></div>
<div class="a" style="left:1561.0px;top:200px;width:1px;height:6px;background:#555"></div>
<div class="a" style="left:1603.0px;top:200px;width:1px;height:6px;background:#555"></div>
<div class="a" style="left:1649.0px;top:200px;width:1px;height:6px;background:#555"></div>
<div class="a" style="left:1691.0px;top:200px;width:1px;height:6px;background:#555"></div>
<div class="a" style="left:1737.0px;top:200px;width:1px;height:6px;background:#555"></div>
<div class="a" style="left:1779.0px;top:200px;width:1px;height:6px;background:#555"></div>
<div class="a" style="left:1826.0px;top:200px;width:1px;height:6px;background:#555"></div>
<div class="a" style="left:1863.0px;top:200px;width:1px;height:6px;background:#555"></div>
<div class="a" style="left:1426.0px;top:203px;width:1px;height:3px;background:#444"></div>
<div class="a" style="left:1434.8px;top:203px;width:1px;height:3px;background:#444"></div>
<div class="a" style="left:1443.6px;top:203px;width:1px;height:3px;background:#444"></div>
<div class="a" style="left:1452.4px;top:203px;width:1px;height:3px;background:#444"></div>
<div class="a" style="left:1461.2px;top:203px;width:1px;height:3px;background:#444"></div>
<div class="a" style="left:1470.0px;top:203px;width:1px;height:3px;background:#444"></div>
<div class="a" style="left:1478.8px;top:203px;width:1px;height:3px;background:#444"></div>
<div class="a" style="left:1487.6px;top:203px;width:1px;height:3px;background:#444"></div>
<div class="a" style="left:1496.4px;top:203px;width:1px;height:3px;background:#444"></div>
<div class="a" style="left:1505.2px;top:203px;width:1px;height:3px;background:#444"></div>
<div class="a" style="left:1514.0px;top:203px;width:1px;height:3px;background:#444"></div>
<div class="a" style="left:1522.8px;top:203px;width:1px;height:3px;background:#444"></div>
<div class="a" style="left:1531.6px;top:203px;width:1px;height:3px;background:#444"></div>
<div class="a" style="left:1540.4px;top:203px;width:1px;height:3px;background:#444"></div>
<div class="a" style="left:1549.2px;top:203px;width:1px;height:3px;background:#444"></div>
<div class="a" style="left:1558.0px;top:203px;width:1px;height:3px;background:#444"></div>
<div class="a" style="left:1566.8px;top:203px;width:1px;height:3px;background:#444"></div>
<div class="a" style="left:1575.6px;top:203px;width:1px;height:3px;background:#444"></div>
<div class="a" style="left:1584.4px;top:203px;width:1px;height:3px;background:#444"></div>
<div class="a" style="left:1593.2px;top:203px;width:1px;height:3px;background:#444"></div>
<div class="a" style="left:1602.0px;top:203px;width:1px;height:3px;background:#444"></div>
<div class="a" style="left:1610.8px;top:203px;width:1px;height:3px;background:#444"></div>
<div class="a" style="left:1619.6px;top:203px;width:1px;height:3px;background:#444"></div>
<div class="a" style="left:1628.4px;top:203px;width:1px;height:3px;background:#444"></div>
<div class="a" style="left:1637.2px;top:203px;width:1px;height:3px;background:#444"></div>
<div class="a" style="left:1646.0px;top:203px;width:1px;height:3px;background:#444"></div>
<div class="a" style="left:1654.8px;top:203px;width:1px;height:3px;background:#444"></div>
<div class="a" style="left:1663.6px;top:203px;width:1px;height:3px;background:#444"></div>
<div class="a" style="left:1672.4px;top:203px;width:1px;height:3px;background:#444"></div>
<div class="a" style="left:1681.2px;top:203px;width:1px;height:3px;background:#444"></div>
<div class="a" style="left:1690.0px;top:203px;width:1px;height:3px;background:#444"></div>
<div class="a" style="left:1698.8px;top:203px;width:1px;height:3px;background:#444"></div>
<div class="a" style="left:1707.6px;top:203px;width:1px;height:3px;background:#444"></div>
<div class="a" style="left:1716.4px;top:203px;width:1px;height:3px;background:#444"></div>
<div class="a" style="left:1725.2px;top:203px;width:1px;height:3px;background:#444"></div>
<div class="a" style="left:1734.0px;top:203px;width:1px;height:3px;background:#444"></div>
<div class="a" style="left:1742.8px;top:203px;width:1px;height:3px;background:#444"></div>
<div class="a" style="left:1751.6px;top:203px;width:1px;height:3px;background:#444"></div>
<div class="a" style="left:1760.4px;top:203px;width:1px;height:3px;background:#444"></div>
<div class="a" style="left:1769.2px;top:203px;width:1px;height:3px;background:#444"></div>
<div class="a" style="left:1778.0px;top:203px;width:1px;height:3px;background:#444"></div>
<div class="a" style="left:1786.8px;top:203px;width:1px;height:3px;background:#444"></div>
<div class="a" style="left:1795.6px;top:203px;width:1px;height:3px;background:#444"></div>
<div class="a" style="left:1804.4px;top:203px;width:1px;height:3px;background:#444"></div>
<div class="a" style="left:1813.2px;top:203px;width:1px;height:3px;background:#444"></div>
<div class="a" style="left:1822.0px;top:203px;width:1px;height:3px;background:#444"></div>
<div class="a" style="left:1830.8px;top:203px;width:1px;height:3px;background:#444"></div>
<div class="a" style="left:1839.6px;top:203px;width:1px;height:3px;background:#444"></div>
<div class="a" style="left:1848.4px;top:203px;width:1px;height:3px;background:#444"></div>
<div class="a" style="left:1857.2px;top:203px;width:1px;height:3px;background:#444"></div>
<div class="a" style="left:1425px;top:206px;width:441px;height:2px;background:#161616"></div>
<div class="a" style="left:1425px;top:208px;width:441px;height:1px;background:#444"></div>
<div class="a tlb" style="left:1416.0px;top:210px">0</div>
<div class="a tlb" style="left:1464.0px;top:210px">0.5</div>
<div class="a tlb" style="left:1504.0px;top:210px">1</div>
<div class="a tlb" style="left:1551.0px;top:210px">1.5</div>
<div class="a tlb" style="left:1593.0px;top:210px">2</div>
<div class="a tlb" style="left:1639.0px;top:210px">2.5</div>
<div class="a tlb" style="left:1681.0px;top:210px">3</div>
<div class="a tlb" style="left:1727.0px;top:210px">3.5</div>
<div class="a tlb" style="left:1769.0px;top:210px">4</div>
<div class="a tlb" style="left:1816.0px;top:210px">4.5</div>
<div class="a tlb" style="left:1853.0px;top:210px">5</div>
<div class="a hdl2" style="left:1510px;top:200px"></div>
<div class="inp pinp" style="left:1347px;top:221px;width:74px;height:18px">1</div>
<div class="a" style="left:1426.0px;top:223px;width:1px;height:6px;background:#555"></div>
<div class="a" style="left:1553.0px;top:223px;width:1px;height:6px;background:#555"></div>
<div class="a" style="left:1626.0px;top:223px;width:1px;height:6px;background:#555"></div>
<div class="a" style="left:1679.0px;top:223px;width:1px;height:6px;background:#555"></div>
<div class="a" style="left:1719.0px;top:223px;width:1px;height:6px;background:#555"></div>
<div class="a" style="left:1752.0px;top:223px;width:1px;height:6px;background:#555"></div>
<div class="a" style="left:1780.0px;top:223px;width:1px;height:6px;background:#555"></div>
<div class="a" style="left:1805.0px;top:223px;width:1px;height:6px;background:#555"></div>
<div class="a" style="left:1827.0px;top:223px;width:1px;height:6px;background:#555"></div>
<div class="a" style="left:1847.0px;top:223px;width:1px;height:6px;background:#555"></div>
<div class="a" style="left:1425px;top:229px;width:421px;height:2px;background:#161616"></div>
<div class="a" style="left:1425px;top:231px;width:421px;height:1px;background:#444"></div>
<div class="a tlb" style="left:1416.0px;top:233px">1</div>
<div class="a tlb" style="left:1543.0px;top:233px">2</div>
<div class="a tlb" style="left:1616.0px;top:233px">3</div>
<div class="a tlb" style="left:1669.0px;top:233px">4</div>
<div class="a tlb" style="left:1709.0px;top:233px">5</div>
<div class="a tlb" style="left:1742.0px;top:233px">6</div>
<div class="a tlb" style="left:1770.0px;top:233px">7</div>
<div class="a tlb" style="left:1795.0px;top:233px">8</div>
<div class="a tlb" style="left:1817.0px;top:233px">9</div>
<div class="a tlb" style="left:1837.0px;top:233px">10</div>
<div class="a hdl2" style="left:1423px;top:223px"></div>
<div class="btn" style="left:1848px;top:220px;width:19px;height:19px;background:#444;color:#ddd;font-size:13px;font-weight:bold;text-align:center;line-height:16px">2</div>
<div class="btn" style="left:1869px;top:220px;width:18px;height:19px;background:#3e3e3e"><svg class="a" style="left:0;top:0" width="17" height="18" viewBox="0 0 17 18"><path d="M2.5 15.5C3.5 12 5 7 7 7.5C9 8 9 12.5 11 12C13 11.5 14 6 15 3" fill="none" stroke="#111" stroke-width="1.5" stroke-linecap="round"/></svg></div>
<div class="inp pinp" style="left:1347px;top:244px;width:74px;height:18px">20</div>
<div class="dd pdd" style="left:1347px;top:265px;width:101px;height:18px;font-size:12px">accelerated</div>
<div class="a cb" style="left:1347px;top:291px"></div>
<div class="dd pdd" style="left:1370px;top:288px;width:312px;height:18px">none</div>
<div class="btn" style="left:1692px;top:290px;width:18px;height:14px;background:#484848"><div class="a" style="left:5px;top:4px;width:7px;height:1.5px;background:#ddd"></div><div class="a" style="left:5px;top:7px;width:7px;height:1.5px;background:#ddd"></div></div>
<div class="a cb" style="left:1714px;top:291px"></div>
<div class="a plbl2" style="left:1731px;top:289px">inject</div>
<div class="a cb" style="left:1772px;top:291px"></div>
<div class="a plbl2" style="left:1789px;top:289px">invert</div>
<div class="a cb" style="left:1831px;top:291px"></div>
<div class="a plbl2" style="left:1848px;top:289px">fringe</div>
<div class="inp pinp" style="left:1347px;top:310px;width:74px;height:18px">1</div>
<div class="btn" style="left:1869px;top:309px;width:18px;height:19px;background:#3e3e3e"><svg class="a" style="left:0;top:0" width="17" height="18" viewBox="0 0 17 18"><path d="M2.5 15.5C3.5 12 5 7 7 7.5C9 8 9 12.5 11 12C13 11.5 14 6 15 3" fill="none" stroke="#111" stroke-width="1.5" stroke-linecap="round"/></svg></div>
<div class="a" style="left:1426.0px;top:312px;width:1px;height:6px;background:#555"></div>
<div class="a" style="left:1472.0px;top:312px;width:1px;height:6px;background:#555"></div>
<div class="a" style="left:1517.0px;top:312px;width:1px;height:6px;background:#555"></div>
<div class="a" style="left:1561.0px;top:312px;width:1px;height:6px;background:#555"></div>
<div class="a" style="left:1606.0px;top:312px;width:1px;height:6px;background:#555"></div>
<div class="a" style="left:1649.0px;top:312px;width:1px;height:6px;background:#555"></div>
<div class="a" style="left:1694.0px;top:312px;width:1px;height:6px;background:#555"></div>
<div class="a" style="left:1738.0px;top:312px;width:1px;height:6px;background:#555"></div>
<div class="a" style="left:1782.0px;top:312px;width:1px;height:6px;background:#555"></div>
<div class="a" style="left:1826.0px;top:312px;width:1px;height:6px;background:#555"></div>
<div class="a" style="left:1863.0px;top:312px;width:1px;height:6px;background:#555"></div>
<div class="a" style="left:1426.0px;top:315px;width:1px;height:3px;background:#444"></div>
<div class="a" style="left:1434.8px;top:315px;width:1px;height:3px;background:#444"></div>
<div class="a" style="left:1443.6px;top:315px;width:1px;height:3px;background:#444"></div>
<div class="a" style="left:1452.4px;top:315px;width:1px;height:3px;background:#444"></div>
<div class="a" style="left:1461.2px;top:315px;width:1px;height:3px;background:#444"></div>
<div class="a" style="left:1470.0px;top:315px;width:1px;height:3px;background:#444"></div>
<div class="a" style="left:1478.8px;top:315px;width:1px;height:3px;background:#444"></div>
<div class="a" style="left:1487.6px;top:315px;width:1px;height:3px;background:#444"></div>
<div class="a" style="left:1496.4px;top:315px;width:1px;height:3px;background:#444"></div>
<div class="a" style="left:1505.2px;top:315px;width:1px;height:3px;background:#444"></div>
<div class="a" style="left:1514.0px;top:315px;width:1px;height:3px;background:#444"></div>
<div class="a" style="left:1522.8px;top:315px;width:1px;height:3px;background:#444"></div>
<div class="a" style="left:1531.6px;top:315px;width:1px;height:3px;background:#444"></div>
<div class="a" style="left:1540.4px;top:315px;width:1px;height:3px;background:#444"></div>
<div class="a" style="left:1549.2px;top:315px;width:1px;height:3px;background:#444"></div>
<div class="a" style="left:1558.0px;top:315px;width:1px;height:3px;background:#444"></div>
<div class="a" style="left:1566.8px;top:315px;width:1px;height:3px;background:#444"></div>
<div class="a" style="left:1575.6px;top:315px;width:1px;height:3px;background:#444"></div>
<div class="a" style="left:1584.4px;top:315px;width:1px;height:3px;background:#444"></div>
<div class="a" style="left:1593.2px;top:315px;width:1px;height:3px;background:#444"></div>
<div class="a" style="left:1602.0px;top:315px;width:1px;height:3px;background:#444"></div>
<div class="a" style="left:1610.8px;top:315px;width:1px;height:3px;background:#444"></div>
<div class="a" style="left:1619.6px;top:315px;width:1px;height:3px;background:#444"></div>
<div class="a" style="left:1628.4px;top:315px;width:1px;height:3px;background:#444"></div>
<div class="a" style="left:1637.2px;top:315px;width:1px;height:3px;background:#444"></div>
<div class="a" style="left:1646.0px;top:315px;width:1px;height:3px;background:#444"></div>
<div class="a" style="left:1654.8px;top:315px;width:1px;height:3px;background:#444"></div>
<div class="a" style="left:1663.6px;top:315px;width:1px;height:3px;background:#444"></div>
<div class="a" style="left:1672.4px;top:315px;width:1px;height:3px;background:#444"></div>
<div class="a" style="left:1681.2px;top:315px;width:1px;height:3px;background:#444"></div>
<div class="a" style="left:1690.0px;top:315px;width:1px;height:3px;background:#444"></div>
<div class="a" style="left:1698.8px;top:315px;width:1px;height:3px;background:#444"></div>
<div class="a" style="left:1707.6px;top:315px;width:1px;height:3px;background:#444"></div>
<div class="a" style="left:1716.4px;top:315px;width:1px;height:3px;background:#444"></div>
<div class="a" style="left:1725.2px;top:315px;width:1px;height:3px;background:#444"></div>
<div class="a" style="left:1734.0px;top:315px;width:1px;height:3px;background:#444"></div>
<div class="a" style="left:1742.8px;top:315px;width:1px;height:3px;background:#444"></div>
<div class="a" style="left:1751.6px;top:315px;width:1px;height:3px;background:#444"></div>
<div class="a" style="left:1760.4px;top:315px;width:1px;height:3px;background:#444"></div>
<div class="a" style="left:1769.2px;top:315px;width:1px;height:3px;background:#444"></div>
<div class="a" style="left:1778.0px;top:315px;width:1px;height:3px;background:#444"></div>
<div class="a" style="left:1786.8px;top:315px;width:1px;height:3px;background:#444"></div>
<div class="a" style="left:1795.6px;top:315px;width:1px;height:3px;background:#444"></div>
<div class="a" style="left:1804.4px;top:315px;width:1px;height:3px;background:#444"></div>
<div class="a" style="left:1813.2px;top:315px;width:1px;height:3px;background:#444"></div>
<div class="a" style="left:1822.0px;top:315px;width:1px;height:3px;background:#444"></div>
<div class="a" style="left:1830.8px;top:315px;width:1px;height:3px;background:#444"></div>
<div class="a" style="left:1839.6px;top:315px;width:1px;height:3px;background:#444"></div>
<div class="a" style="left:1848.4px;top:315px;width:1px;height:3px;background:#444"></div>
<div class="a" style="left:1857.2px;top:315px;width:1px;height:3px;background:#444"></div>
<div class="a" style="left:1425px;top:318px;width:441px;height:2px;background:#161616"></div>
<div class="a" style="left:1425px;top:320px;width:441px;height:1px;background:#444"></div>
<div class="a tlb" style="left:1416.0px;top:322px">0</div>
<div class="a tlb" style="left:1462.0px;top:322px">0.1</div>
<div class="a tlb" style="left:1507.0px;top:322px">0.2</div>
<div class="a tlb" style="left:1551.0px;top:322px">0.3</div>
<div class="a tlb" style="left:1596.0px;top:322px">0.4</div>
<div class="a tlb" style="left:1639.0px;top:322px">0.5</div>
<div class="a tlb" style="left:1684.0px;top:322px">0.6</div>
<div class="a tlb" style="left:1728.0px;top:322px">0.7</div>
<div class="a tlb" style="left:1772.0px;top:322px">0.8</div>
<div class="a tlb" style="left:1816.0px;top:322px">0.9</div>
<div class="a tlb" style="left:1853.0px;top:322px">1</div>
<div class="a hdl2" style="left:1862px;top:312px"></div>
<div class="a" style="left:1902px;top:94px;width:15px;height:986px;background:#2e2e2e"></div>
<div class="a" style="left:1903px;top:94px;width:14px;height:14px;background:#383838;border:1px solid #222"></div>
<div class="a" style="left:1905px;top:97px;border-left:5px solid transparent;border-right:5px solid transparent;border-bottom:6px solid #eee"></div>
<div class="a" style="left:1902px;top:110px;width:16px;height:970px;background:#313131;border-left:1px solid #262626;border-right:2px solid #141414"></div>
<div class="a" style="left:1903px;top:110px;width:1px;height:970px;background:#444"></div>
<div class="a" style="left:1915px;top:110px;width:1px;height:970px;background:#444"></div>
<div class="a" style="left:1905px;top:597px;width:10px;height:17px;background:radial-gradient(circle,#555 0.9px,transparent 1.1px) 0 0/4px 4px"></div>
<svg class="a" style="left:1745px;top:45px" width="124" height="124" viewBox="1745 45 124 124"><circle cx="1807" cy="106.3" r="56.5" fill="none" stroke="rgba(255,255,255,0.17)" stroke-width="2.6"/>
<path d="M1807 60C1800 70 1790 84 1785 96C1779 110 1781 124 1788 133C1794 140 1802 144 1807 145C1812 144 1820 140 1826 133C1833 124 1835 110 1829 96C1824 84 1814 70 1807 60z" fill="rgba(255,255,255,0.12)"/>
<rect x="1805" y="144" width="4" height="8" fill="rgba(255,255,255,0.12)"/>
<g stroke="rgba(20,20,20,0.45)" stroke-width="1.3" fill="none">
<path d="M1803 74V118L1800 124V140M1811 74V118L1814 124V140"/>
<path d="M1793 84V96L1799 104M1821 84V96L1815 104"/>
<path d="M1785 116L1796 131M1829 116L1818 131"/>
<path d="M1799 80V100M1815 80V100"/>
</g>
<g fill="rgba(20,20,20,0.5)"><circle cx="1803" cy="74" r="1.3"/><circle cx="1811" cy="74" r="1.3"/><circle cx="1793" cy="84" r="1.3"/><circle cx="1821" cy="84" r="1.3"/><circle cx="1796" cy="131" r="1.3"/><circle cx="1818" cy="131" r="1.3"/></g>
</svg><!-- DIALOG -->
<div class="a" style="left:760px;top:528px;width:440px;height:172px;box-shadow:0 10px 40px rgba(0,0,0,0.65);border-radius:5px;left:767px;width:425px;top:530px;height:162px"></div>
<div class="a" style="left:767px;top:530px;width:425px;height:23px;background:linear-gradient(#eeeeee,#d8d8d8);border-radius:5px 5px 0 0;border-bottom:1px solid #b0b0b0"></div>
<div class="a" style="left:775px;top:536px;width:12px;height:12px;border-radius:50%;background:#8c8c8c;border:1px solid #686868"></div>
<div class="a" style="left:795px;top:536px;width:12px;height:12px;border-radius:50%;background:#8c8c8c;border:1px solid #686868"></div>
<div class="a" style="left:815px;top:536px;width:12px;height:12px;border-radius:50%;background:#8c8c8c;border:1px solid #686868"></div>
<svg class="a" style="left:877px;top:534px" width="16" height="16" viewBox="0 0 16 16"><circle cx="8" cy="8" r="6.5" fill="#ddd" stroke="#bbb" stroke-width="1"/><rect x="4.5" y="6.5" width="7" height="3" rx="1.5" fill="#999"/></svg>
<div class="a" style="left:898px;top:533px;font-size:14px;color:#444">register node to customShelf</div>
<div class="a" style="left:767px;top:553px;width:425px;height:140px;background:#2a2a2a;border-radius:0 0 4px 4px"></div>
<div class="a" style="left:779px;top:565px;width:402px;height:115px;background:#272727;border:1px solid #1f1f1f;border-radius:2px"></div>
<div class="a dlbl" style="left:789px;top:578px">add to shelf</div>
<div class="a" style="left:864px;top:576px;width:305px;height:20px;background:#2b2b2b;border:1px solid #222;border-radius:2px"></div>
<div class="a dlbl" style="left:868px;top:578px">filterFavourites</div>
<div class="a" style="left:1157px;top:584px;border-left:4px solid transparent;border-right:4px solid transparent;border-top:4px solid #eee"></div>
<div class="a dlbl" style="left:789px;top:606px">custom shortcut</div>
<div class="a dcb" style="left:888px;top:607px"></div>
<div class="a dlbl" style="left:906px;top:606px">ctrl</div>
<div class="a dcb" style="left:938px;top:607px"></div>
<div class="a dlbl" style="left:956px;top:606px">shift</div>
<div class="a dcb" style="left:995px;top:607px"></div>
<div class="a dlbl" style="left:1013px;top:606px">alt</div>
<div class="a" style="left:1041px;top:604px;width:128px;height:20px;background:#272727;border:1px solid #1e1e1e;border-radius:2px"></div>
<div class="a" style="left:792px;top:635px;width:180px;height:31px;background:#2a8aac;border-bottom:1px solid #1f6a86"></div>
<div class="a dlbl" style="left:792px;top:643px;width:180px;text-align:center;color:#d8e4e8">add</div>
<div class="a" style="left:989px;top:635px;width:177px;height:32px;background:#252525"></div>
<div class="a dlbl" style="left:989px;top:643px;width:177px;text-align:center;color:#f0f0f0">cancel</div>
<!-- cursor -->
<svg class="a" style="left:871px;top:616px" width="14" height="21" viewBox="0 0 14 21"><path d="M1.5 1.5V16L5 12.5L7.5 18.5L10 17.5L7.5 11.5H12.5z" fill="#111" stroke="#fff" stroke-width="1.3"/></svg>

<div class="a" style="left:0;top:22px;width:1px;height:1058px;background:#c8c8c8"></div><div class="a" style="left:1919px;top:22px;width:1px;height:1058px;background:#e0e0e0"></div>
</body></html>
